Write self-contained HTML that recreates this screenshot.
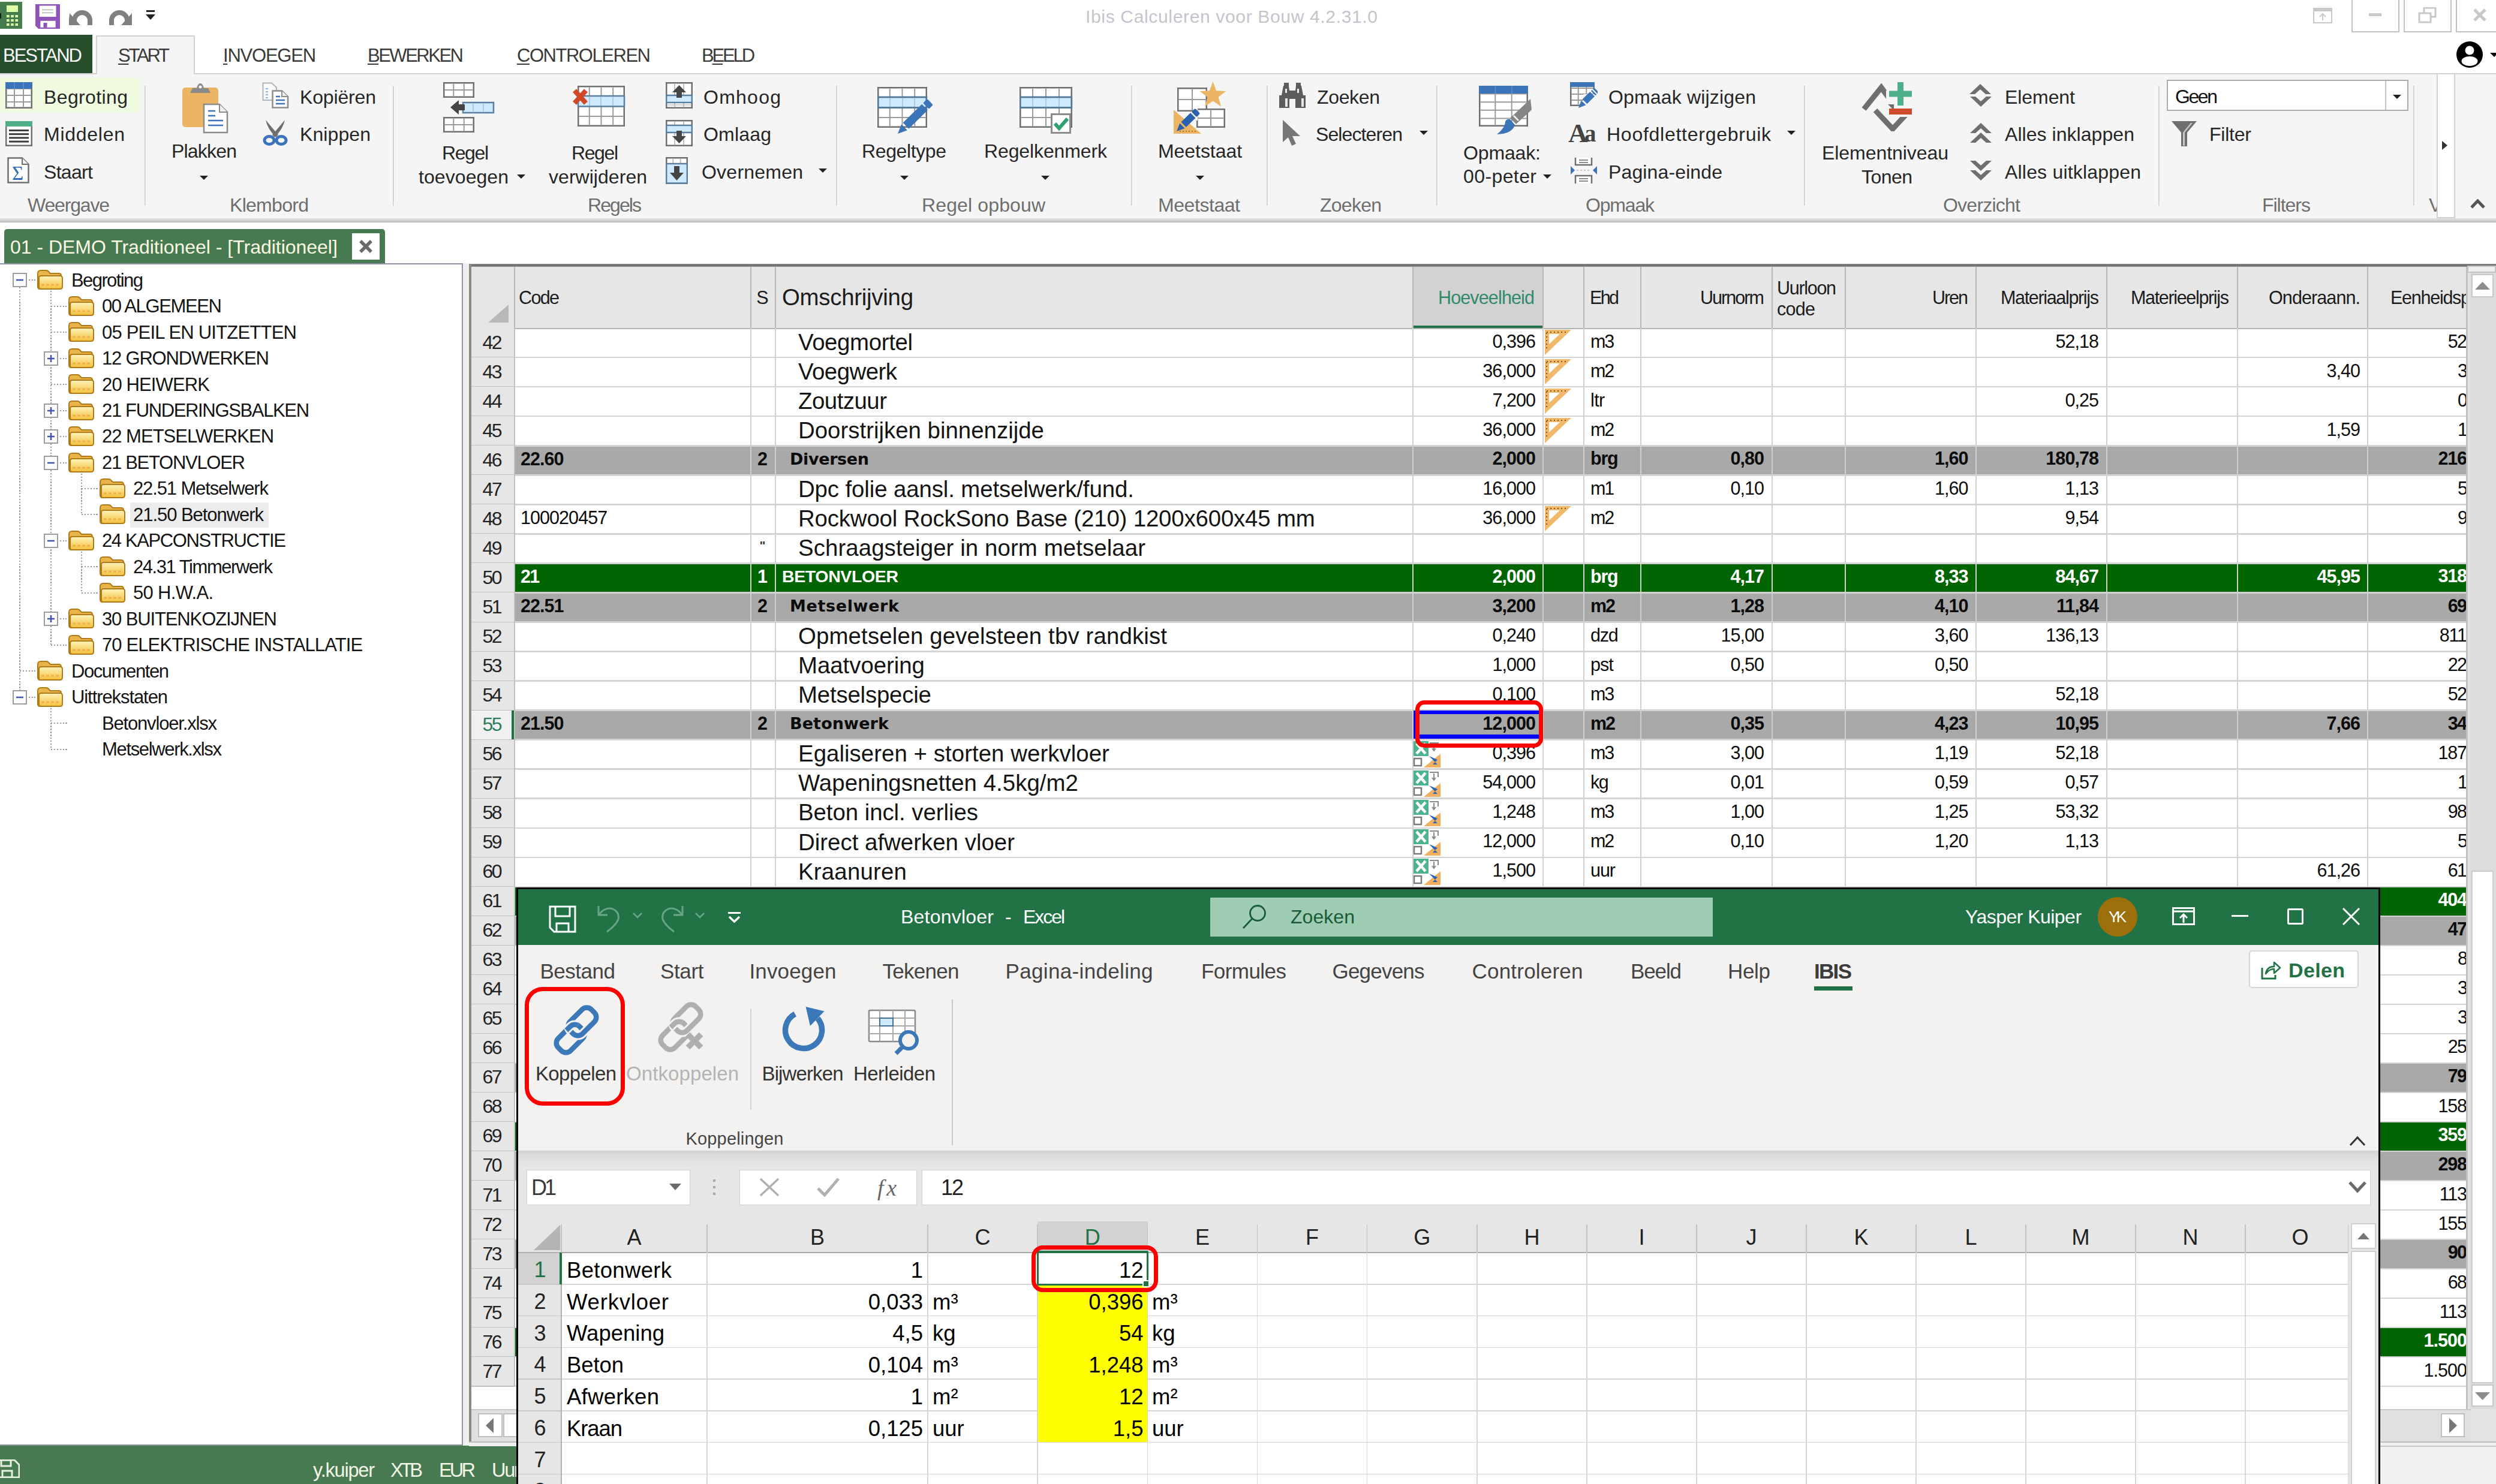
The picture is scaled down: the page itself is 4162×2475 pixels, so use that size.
<!DOCTYPE html>
<html lang="nl"><head><meta charset="utf-8"><title>Ibis Calculeren voor Bouw</title><style>
html,body{margin:0;padding:0;}
body{width:4162px;height:2475px;overflow:hidden;background:#fff;position:relative;font-family:"Liberation Sans",sans-serif;}
div,svg{position:absolute;box-sizing:border-box;}
.t{white-space:nowrap;}
u{text-decoration-thickness:2px;text-underline-offset:3px;}
</style></head><body>
<svg style="left:0px;top:3px;" width="38" height="45" viewBox="0 0 38 45"><rect x="-4" y="0" width="41" height="45" fill="#477c4e"/><rect x="11" y="6" width="19" height="11" fill="#dcffa8"/><rect x="11.0" y="22.0" width="4.6" height="4" fill="#dcffa8"/><rect x="11.0" y="29.0" width="4.6" height="4" fill="#dcffa8"/><rect x="11.0" y="36.0" width="4.6" height="4" fill="#dcffa8"/><rect x="18.2" y="22.0" width="4.6" height="4" fill="#dcffa8"/><rect x="18.2" y="29.0" width="4.6" height="4" fill="#dcffa8"/><rect x="18.2" y="36.0" width="4.6" height="4" fill="#dcffa8"/><rect x="25.4" y="22.0" width="4.6" height="4" fill="#dcffa8"/><rect x="25.4" y="29.0" width="4.6" height="4" fill="#dcffa8"/><rect x="25.4" y="36.0" width="4.6" height="4" fill="#dcffa8"/><rect x="-2" y="19" width="4" height="9" fill="#10200f"/></svg>
<svg style="left:59px;top:6.5px;" width="41" height="41" viewBox="0 0 41 41"><path d="M0 0H41V41H5L0 36Z" fill="#8f55b6"/><rect x="6.7" y="2.5" width="27.8" height="18.5" fill="#fff"/><rect x="11" y="8.3" width="19" height="2" fill="#c4c4c4"/><rect x="11" y="13.3" width="19" height="2" fill="#c4c4c4"/><rect x="8.4" y="27.8" width="25.3" height="11" fill="#fff"/><rect x="13.5" y="31" width="6" height="7.8" fill="#8f55b6"/></svg>
<svg style="left:115px;top:15px;" width="45" height="28" viewBox="0 0 45 28"><path d="M9 27V19A13 13 0 0 1 35 19V27" fill="none" stroke="#808080" stroke-width="8"/><path d="M0 8L16 27H-2Z" fill="#808080" transform="translate(1,0)"/><path d="M1 27V7L19 27Z" fill="#808080"/></svg>
<svg style="left:176px;top:15px;" width="45" height="28" viewBox="0 0 45 28"><path d="M36 27V19A13 13 0 0 0 10 19V27" fill="none" stroke="#808080" stroke-width="8"/><path d="M44 27V7L26 27Z" fill="#808080"/></svg>
<svg style="left:243px;top:17px;" width="16" height="17" viewBox="0 0 16 17"><rect x="1" y="0" width="14" height="3" fill="#222"/><path d="M0 7H16L8 16Z" fill="#222"/></svg>
<div class="t" style="left:1810.0px;top:13.3px;font-size:30px;line-height:30px;color:#c4c4cc;letter-spacing:0.66px;">Ibis Calculeren voor Bouw 4.2.31.0</div>
<div style="left:3921px;top:-3px;width:80px;height:57px;border:2.5px solid #c2c2c2;"></div>
<div style="left:4008px;top:-3px;width:80px;height:57px;border:2.5px solid #c2c2c2;"></div>
<div style="left:4095px;top:-3px;width:75px;height:57px;border:2.5px solid #c2c2c2;"></div>
<svg style="left:3857px;top:13px;" width="32" height="26" viewBox="0 0 32 26"><rect x="1" y="1" width="30" height="24" fill="#fff" stroke="#c8c8c8" stroke-width="2"/><rect x="1" y="1" width="30" height="5" fill="#c8c8c8"/><path d="M16 21V11M11 15L16 10L21 15" stroke="#c8c8c8" stroke-width="2" fill="none"/></svg>
<div style="left:3950px;top:22px;width:21px;height:5px;background:#c8c8c8;"></div>
<svg style="left:4032px;top:12px;" width="32" height="28" viewBox="0 0 32 28"><rect x="10" y="1" width="19" height="15" fill="none" stroke="#c8c8c8" stroke-width="3"/><rect x="2" y="10" width="19" height="15" fill="#fff" stroke="#c8c8c8" stroke-width="3"/></svg>
<svg style="left:4124px;top:14px;" width="22" height="22" viewBox="0 0 22 22"><path d="M2 2L20 20M20 2L2 20" stroke="#c8c8c8" stroke-width="5"/></svg>
<svg style="left:4096px;top:69px;" width="66" height="44" viewBox="0 0 66 44"><circle cx="22" cy="22" r="22" fill="#000"/><circle cx="22" cy="15" r="7.5" fill="#fff"/><clipPath id="ucl"><circle cx="22" cy="22" r="19.5"/></clipPath><ellipse cx="22" cy="33" rx="13.5" ry="8" fill="#fff" clip-path="url(#ucl)"/><path d="M56 19H70L63 26Z" fill="#000"/></svg>
<div style="left:0px;top:58px;width:154px;height:65px;background:#264d2c;"></div>
<div class="t" style="left:5.0px;top:77.4px;font-size:31px;line-height:31px;color:#fff;letter-spacing:-2.02px;">BESTAND</div>
<div style="left:160px;top:59px;width:165px;height:65px;background:#f5f5f5;border:2px solid #d2d2d2;border-bottom:none;"></div>
<div class="t" style="left:197.0px;top:77.4px;font-size:31px;line-height:31px;color:#3a3a3a;letter-spacing:-3.19px;"><u>S</u>TART</div>
<div class="t" style="left:372.0px;top:77.4px;font-size:31px;line-height:31px;color:#3a3a3a;letter-spacing:-1.23px;"><u>I</u>NVOEGEN</div>
<div class="t" style="left:613.0px;top:77.4px;font-size:31px;line-height:31px;color:#3a3a3a;letter-spacing:-2.49px;"><u>B</u>EWERKEN</div>
<div class="t" style="left:862.0px;top:77.4px;font-size:31px;line-height:31px;color:#3a3a3a;letter-spacing:-1.47px;"><u>C</u>ONTROLEREN</div>
<div class="t" style="left:1170.0px;top:77.4px;font-size:31px;line-height:31px;color:#3a3a3a;letter-spacing:-3.16px;">B<u>E</u>ELD</div>
<div style="left:0px;top:122px;width:4162px;height:242px;background:#f5f5f5;border-top:2px solid #d2d2d2;"></div>
<div style="left:162px;top:121px;width:161px;height:4px;background:#f5f5f5;"></div>
<div style="left:0px;top:364px;width:4162px;height:7px;background:linear-gradient(#e2e2e2,#d0d0d0 60%,#b4b4b4);"></div>
<div style="left:241px;top:143px;width:2px;height:200px;background:#d4d4d4;"></div>
<div style="left:243px;top:143px;width:1px;height:200px;background:#fff;"></div>
<div style="left:655px;top:143px;width:2px;height:200px;background:#d4d4d4;"></div>
<div style="left:657px;top:143px;width:1px;height:200px;background:#fff;"></div>
<div style="left:1394px;top:143px;width:2px;height:200px;background:#d4d4d4;"></div>
<div style="left:1396px;top:143px;width:1px;height:200px;background:#fff;"></div>
<div style="left:1886px;top:143px;width:2px;height:200px;background:#d4d4d4;"></div>
<div style="left:1888px;top:143px;width:1px;height:200px;background:#fff;"></div>
<div style="left:2112px;top:143px;width:2px;height:200px;background:#d4d4d4;"></div>
<div style="left:2114px;top:143px;width:1px;height:200px;background:#fff;"></div>
<div style="left:2395px;top:143px;width:2px;height:200px;background:#d4d4d4;"></div>
<div style="left:2397px;top:143px;width:1px;height:200px;background:#fff;"></div>
<div style="left:3008px;top:143px;width:2px;height:200px;background:#d4d4d4;"></div>
<div style="left:3010px;top:143px;width:1px;height:200px;background:#fff;"></div>
<div style="left:3599px;top:143px;width:2px;height:200px;background:#d4d4d4;"></div>
<div style="left:3601px;top:143px;width:1px;height:200px;background:#fff;"></div>
<div style="left:4024px;top:143px;width:2px;height:200px;background:#d4d4d4;"></div>
<div style="left:4026px;top:143px;width:1px;height:200px;background:#fff;"></div>
<div style="left:0px;top:130px;width:233px;height:58px;background:#f0fbe0;"></div>
<div class="t" style="left:73.0px;top:145.9px;font-size:32px;line-height:32px;color:#262626;letter-spacing:0.38px;">Begroting</div>
<div class="t" style="left:73.0px;top:208.4px;font-size:32px;line-height:32px;color:#262626;letter-spacing:0.73px;">Middelen</div>
<div class="t" style="left:73.0px;top:271.4px;font-size:32px;line-height:32px;color:#262626;letter-spacing:-0.68px;">Staart</div>
<div class="t" style="left:46.0px;top:326.4px;font-size:32px;line-height:32px;color:#6e6e6e;letter-spacing:-1.18px;">Weergave</div>
<div class="t" style="left:286.0px;top:236.4px;font-size:32px;line-height:32px;color:#262626;letter-spacing:-0.81px;">Plakken</div>
<svg style="left:333px;top:293px;" width="14" height="7" viewBox="0 0 14 7"><path d="M0 0H14L7.0 7Z" fill="#222"/></svg>
<div class="t" style="left:500.0px;top:145.9px;font-size:32px;line-height:32px;color:#262626;letter-spacing:-0.16px;">Kopiëren</div>
<div class="t" style="left:500.0px;top:208.4px;font-size:32px;line-height:32px;color:#262626;letter-spacing:0.09px;">Knippen</div>
<div class="t" style="left:383.0px;top:326.4px;font-size:32px;line-height:32px;color:#6e6e6e;letter-spacing:-0.71px;">Klembord</div>
<div class="t" style="left:737.0px;top:239.4px;font-size:32px;line-height:32px;color:#262626;letter-spacing:-1.40px;">Regel</div>
<div class="t" style="left:698.0px;top:279.4px;font-size:32px;line-height:32px;color:#262626;letter-spacing:0.07px;">toevoegen</div>
<svg style="left:861.5px;top:290.5px;" width="14" height="7" viewBox="0 0 14 7"><path d="M0 0H14L7.0 7Z" fill="#222"/></svg>
<div class="t" style="left:953.0px;top:239.4px;font-size:32px;line-height:32px;color:#262626;letter-spacing:-1.40px;">Regel</div>
<div class="t" style="left:915.0px;top:279.4px;font-size:32px;line-height:32px;color:#262626;letter-spacing:0.04px;">verwijderen</div>
<div class="t" style="left:1173.0px;top:145.9px;font-size:32px;line-height:32px;color:#262626;letter-spacing:1.25px;">Omhoog</div>
<div class="t" style="left:1173.0px;top:208.4px;font-size:32px;line-height:32px;color:#262626;letter-spacing:0.19px;">Omlaag</div>
<div class="t" style="left:1170.0px;top:271.4px;font-size:32px;line-height:32px;color:#262626;letter-spacing:0.23px;">Overnemen</div>
<svg style="left:1365px;top:280.5px;" width="14" height="7" viewBox="0 0 14 7"><path d="M0 0H14L7.0 7Z" fill="#222"/></svg>
<div class="t" style="left:980.0px;top:326.4px;font-size:32px;line-height:32px;color:#6e6e6e;letter-spacing:-1.92px;">Regels</div>
<div class="t" style="left:1437.0px;top:236.4px;font-size:32px;line-height:32px;color:#262626;letter-spacing:-0.39px;">Regeltype</div>
<svg style="left:1501px;top:293px;" width="14" height="7" viewBox="0 0 14 7"><path d="M0 0H14L7.0 7Z" fill="#222"/></svg>
<div class="t" style="left:1641.0px;top:236.4px;font-size:32px;line-height:32px;color:#262626;letter-spacing:-0.12px;">Regelkenmerk</div>
<svg style="left:1736px;top:293px;" width="14" height="7" viewBox="0 0 14 7"><path d="M0 0H14L7.0 7Z" fill="#222"/></svg>
<div class="t" style="left:1537.0px;top:326.4px;font-size:32px;line-height:32px;color:#6e6e6e;letter-spacing:0.13px;">Regel opbouw</div>
<div class="t" style="left:1931.0px;top:236.4px;font-size:32px;line-height:32px;color:#262626;letter-spacing:-0.06px;">Meetstaat</div>
<svg style="left:1994px;top:293px;" width="14" height="7" viewBox="0 0 14 7"><path d="M0 0H14L7.0 7Z" fill="#222"/></svg>
<div class="t" style="left:1931.0px;top:326.4px;font-size:32px;line-height:32px;color:#6e6e6e;letter-spacing:-0.44px;">Meetstaat</div>
<div class="t" style="left:2196.0px;top:145.9px;font-size:32px;line-height:32px;color:#262626;letter-spacing:-0.35px;">Zoeken</div>
<div class="t" style="left:2194.0px;top:208.4px;font-size:32px;line-height:32px;color:#262626;letter-spacing:-0.89px;">Selecteren</div>
<svg style="left:2367px;top:217.5px;" width="14" height="7" viewBox="0 0 14 7"><path d="M0 0H14L7.0 7Z" fill="#222"/></svg>
<div class="t" style="left:2201.0px;top:326.4px;font-size:32px;line-height:32px;color:#6e6e6e;letter-spacing:-0.75px;">Zoeken</div>
<div class="t" style="left:2440.0px;top:239.4px;font-size:32px;line-height:32px;color:#262626;letter-spacing:-0.14px;">Opmaak:</div>
<div class="t" style="left:2440.0px;top:278.4px;font-size:32px;line-height:32px;color:#262626;letter-spacing:0.40px;">00-peter</div>
<svg style="left:2573px;top:290.5px;" width="14" height="7" viewBox="0 0 14 7"><path d="M0 0H14L7.0 7Z" fill="#222"/></svg>
<div class="t" style="left:2682.0px;top:145.9px;font-size:32px;line-height:32px;color:#262626;letter-spacing:0.17px;">Opmaak wijzigen</div>
<div class="t" style="left:2679.0px;top:208.4px;font-size:32px;line-height:32px;color:#262626;letter-spacing:0.74px;">Hoofdlettergebruik</div>
<svg style="left:2980px;top:217.5px;" width="14" height="7" viewBox="0 0 14 7"><path d="M0 0H14L7.0 7Z" fill="#222"/></svg>
<div class="t" style="left:2682.0px;top:271.4px;font-size:32px;line-height:32px;color:#262626;letter-spacing:0.13px;">Pagina-einde</div>
<div class="t" style="left:2644.0px;top:326.4px;font-size:32px;line-height:32px;color:#6e6e6e;letter-spacing:-1.19px;">Opmaak</div>
<div class="t" style="left:3038.0px;top:239.4px;font-size:32px;line-height:32px;color:#262626;letter-spacing:-0.06px;">Elementniveau</div>
<div class="t" style="left:3104.0px;top:279.4px;font-size:32px;line-height:32px;color:#262626;letter-spacing:-0.55px;">Tonen</div>
<div class="t" style="left:3343.0px;top:145.9px;font-size:32px;line-height:32px;color:#262626;letter-spacing:-0.07px;">Element</div>
<div class="t" style="left:3343.0px;top:208.4px;font-size:32px;line-height:32px;color:#262626;letter-spacing:0.05px;">Alles inklappen</div>
<div class="t" style="left:3343.0px;top:271.4px;font-size:32px;line-height:32px;color:#262626;letter-spacing:0.19px;">Alles uitklappen</div>
<div class="t" style="left:3240.0px;top:326.4px;font-size:32px;line-height:32px;color:#6e6e6e;letter-spacing:-0.77px;">Overzicht</div>
<div style="left:3613px;top:133px;width:403px;height:52px;background:#fff;border:2px solid #ababab;"></div>
<div style="left:3977px;top:135px;width:2px;height:48px;background:#c4c4c4;"></div>
<div class="t" style="left:3627.0px;top:145.4px;font-size:32px;line-height:32px;color:#111;letter-spacing:-2.43px;">Geen</div>
<svg style="left:3989.5px;top:157.5px;" width="14" height="7" viewBox="0 0 14 7"><path d="M0 0H14L7.0 7Z" fill="#222"/></svg>
<div class="t" style="left:3684.0px;top:208.4px;font-size:32px;line-height:32px;color:#262626;letter-spacing:-0.22px;">Filter</div>
<div class="t" style="left:3772.0px;top:326.4px;font-size:32px;line-height:32px;color:#6e6e6e;letter-spacing:-1.02px;">Filters</div>
<div class="t" style="left:4050.0px;top:326.4px;font-size:32px;line-height:32px;color:#6e6e6e;">V</div>
<div style="left:4063px;top:122px;width:31px;height:242px;background:#fff;border:2px solid #d2d2d2;"></div>
<div style="left:4094px;top:124px;width:68px;height:240px;background:#f5f5f5;"></div>
<svg style="left:4072px;top:235px;" width="9" height="15" viewBox="0 0 9 15"><path d="M0 0L9 7.5L0 15Z" fill="#333"/></svg>
<svg style="left:4119px;top:332px;" width="25" height="16" viewBox="0 0 25 16"><path d="M2 14L12.5 3L23 14" fill="none" stroke="#555" stroke-width="5"/></svg>
<div style="left:7px;top:382px;width:635px;height:58px;background:#477a50;border-radius:5px 5px 0 0;"></div>
<div class="t" style="left:17.0px;top:396.4px;font-size:32px;line-height:32px;color:#fbfbe4;letter-spacing:-0.02px;">01 - DEMO Traditioneel - [Traditioneel]</div>
<div style="left:587px;top:389px;width:46px;height:44px;background:#fff;"></div>
<svg style="left:598px;top:399px;" width="24" height="24" viewBox="0 0 24 24"><path d="M3 3L21 21M21 3L3 21" stroke="#6a6a6a" stroke-width="5.5"/></svg>
<div style="left:0px;top:439px;width:772px;height:1972px;background:#fff;border:2px solid #8e96a6;border-left:none;"></div>
<div style="left:772px;top:439px;width:10px;height:1972px;background:#f0f0f0;"></div>
<svg width="0" height="0" style="left:0;top:0"><defs><linearGradient id="fg" x1="0" y1="0" x2="0" y2="1"><stop offset="0" stop-color="#fff3b8"/><stop offset="1" stop-color="#f3c23f"/></linearGradient></defs></svg>
<div style="left:32px;top:479.3px;width:2px;height:671.36px;background:repeating-linear-gradient(180deg,#9a9a9a 0 2.45px,transparent 2.45px 4.9px);"></div>
<div style="left:83.5px;top:485.3px;width:2px;height:590.44px;background:repeating-linear-gradient(180deg,#9a9a9a 0 2.45px,transparent 2.45px 4.9px);"></div>
<div style="left:135px;top:789.52px;width:2px;height:68.92px;background:repeating-linear-gradient(180deg,#9a9a9a 0 2.45px,transparent 2.45px 4.9px);"></div>
<div style="left:135px;top:919.9px;width:2px;height:68.92px;background:repeating-linear-gradient(180deg,#9a9a9a 0 2.45px,transparent 2.45px 4.9px);"></div>
<div style="left:83.5px;top:1180.66px;width:2px;height:68.92px;background:repeating-linear-gradient(180deg,#9a9a9a 0 2.45px,transparent 2.45px 4.9px);"></div>
<div style="left:217px;top:838px;width:231px;height:42px;background:#ececec;"></div>
<div style="left:33px;top:466.3px;width:26px;height:2px;background:repeating-linear-gradient(90deg,#9a9a9a 0 2.45px,transparent 2.45px 4.9px);"></div>
<svg style="left:21px;top:455.3px;" width="24" height="24" viewBox="0 0 24 24"><rect x="1" y="1" width="22" height="22" fill="#fdfdfd" stroke="#9c9c9c" stroke-width="2"/><path d="M6 12H18" stroke="#3e57a8" stroke-width="2.5"/></svg>
<svg style="left:60px;top:448.3px;" width="46" height="36" viewBox="0 0 46 36"><path d="M3 8Q3 3 8 3H17Q20 3 22 6L24 8H38Q42 8 42 12V30Q42 34 38 34H7Q3 34 3 30Z" fill="#e9b44a" stroke="#b07a18" stroke-width="2"/><path d="M5 15Q5 12 9 12H40Q44 12 44 16V30Q44 34 40 34H8Q5 34 5 31Z" fill="url(#fg)" stroke="#b07a18" stroke-width="2"/><path d="M9 27H40" stroke="#f4a040" stroke-width="3" stroke-dasharray="5 3" opacity=".7"/></svg>
<div class="t" style="left:119.0px;top:451.7px;font-size:31px;line-height:31px;color:#141414;letter-spacing:-1.59px;">Begroting</div>
<div style="left:84.5px;top:509.76px;width:26.5px;height:2px;background:repeating-linear-gradient(90deg,#9a9a9a 0 2.45px,transparent 2.45px 4.9px);"></div>
<svg style="left:112px;top:491.76px;" width="46" height="36" viewBox="0 0 46 36"><path d="M3 8Q3 3 8 3H17Q20 3 22 6L24 8H38Q42 8 42 12V30Q42 34 38 34H7Q3 34 3 30Z" fill="#e9b44a" stroke="#b07a18" stroke-width="2"/><path d="M5 15Q5 12 9 12H40Q44 12 44 16V30Q44 34 40 34H8Q5 34 5 31Z" fill="url(#fg)" stroke="#b07a18" stroke-width="2"/><path d="M9 27H40" stroke="#f4a040" stroke-width="3" stroke-dasharray="5 3" opacity=".7"/></svg>
<div class="t" style="left:170.0px;top:495.1px;font-size:31px;line-height:31px;color:#141414;letter-spacing:-1.37px;">00 ALGEMEEN</div>
<div style="left:84.5px;top:553.22px;width:26.5px;height:2px;background:repeating-linear-gradient(90deg,#9a9a9a 0 2.45px,transparent 2.45px 4.9px);"></div>
<svg style="left:112px;top:535.22px;" width="46" height="36" viewBox="0 0 46 36"><path d="M3 8Q3 3 8 3H17Q20 3 22 6L24 8H38Q42 8 42 12V30Q42 34 38 34H7Q3 34 3 30Z" fill="#e9b44a" stroke="#b07a18" stroke-width="2"/><path d="M5 15Q5 12 9 12H40Q44 12 44 16V30Q44 34 40 34H8Q5 34 5 31Z" fill="url(#fg)" stroke="#b07a18" stroke-width="2"/><path d="M9 27H40" stroke="#f4a040" stroke-width="3" stroke-dasharray="5 3" opacity=".7"/></svg>
<div class="t" style="left:170.0px;top:538.6px;font-size:31px;line-height:31px;color:#141414;letter-spacing:-0.79px;">05 PEIL EN UITZETTEN</div>
<div style="left:84.5px;top:596.68px;width:26.5px;height:2px;background:repeating-linear-gradient(90deg,#9a9a9a 0 2.45px,transparent 2.45px 4.9px);"></div>
<svg style="left:72.5px;top:585.68px;" width="24" height="24" viewBox="0 0 24 24"><rect x="1" y="1" width="22" height="22" fill="#fdfdfd" stroke="#9c9c9c" stroke-width="2"/><path d="M6 12H18" stroke="#3e57a8" stroke-width="2.5"/><path d="M12 6V18" stroke="#3e57a8" stroke-width="2.5"/></svg>
<svg style="left:112px;top:578.68px;" width="46" height="36" viewBox="0 0 46 36"><path d="M3 8Q3 3 8 3H17Q20 3 22 6L24 8H38Q42 8 42 12V30Q42 34 38 34H7Q3 34 3 30Z" fill="#e9b44a" stroke="#b07a18" stroke-width="2"/><path d="M5 15Q5 12 9 12H40Q44 12 44 16V30Q44 34 40 34H8Q5 34 5 31Z" fill="url(#fg)" stroke="#b07a18" stroke-width="2"/><path d="M9 27H40" stroke="#f4a040" stroke-width="3" stroke-dasharray="5 3" opacity=".7"/></svg>
<div class="t" style="left:170.0px;top:582.0px;font-size:31px;line-height:31px;color:#141414;letter-spacing:-1.20px;">12 GRONDWERKEN</div>
<div style="left:84.5px;top:640.14px;width:26.5px;height:2px;background:repeating-linear-gradient(90deg,#9a9a9a 0 2.45px,transparent 2.45px 4.9px);"></div>
<svg style="left:112px;top:622.14px;" width="46" height="36" viewBox="0 0 46 36"><path d="M3 8Q3 3 8 3H17Q20 3 22 6L24 8H38Q42 8 42 12V30Q42 34 38 34H7Q3 34 3 30Z" fill="#e9b44a" stroke="#b07a18" stroke-width="2"/><path d="M5 15Q5 12 9 12H40Q44 12 44 16V30Q44 34 40 34H8Q5 34 5 31Z" fill="url(#fg)" stroke="#b07a18" stroke-width="2"/><path d="M9 27H40" stroke="#f4a040" stroke-width="3" stroke-dasharray="5 3" opacity=".7"/></svg>
<div class="t" style="left:170.0px;top:625.5px;font-size:31px;line-height:31px;color:#141414;letter-spacing:-0.86px;">20 HEIWERK</div>
<div style="left:84.5px;top:683.6px;width:26.5px;height:2px;background:repeating-linear-gradient(90deg,#9a9a9a 0 2.45px,transparent 2.45px 4.9px);"></div>
<svg style="left:72.5px;top:672.6px;" width="24" height="24" viewBox="0 0 24 24"><rect x="1" y="1" width="22" height="22" fill="#fdfdfd" stroke="#9c9c9c" stroke-width="2"/><path d="M6 12H18" stroke="#3e57a8" stroke-width="2.5"/><path d="M12 6V18" stroke="#3e57a8" stroke-width="2.5"/></svg>
<svg style="left:112px;top:665.6px;" width="46" height="36" viewBox="0 0 46 36"><path d="M3 8Q3 3 8 3H17Q20 3 22 6L24 8H38Q42 8 42 12V30Q42 34 38 34H7Q3 34 3 30Z" fill="#e9b44a" stroke="#b07a18" stroke-width="2"/><path d="M5 15Q5 12 9 12H40Q44 12 44 16V30Q44 34 40 34H8Q5 34 5 31Z" fill="url(#fg)" stroke="#b07a18" stroke-width="2"/><path d="M9 27H40" stroke="#f4a040" stroke-width="3" stroke-dasharray="5 3" opacity=".7"/></svg>
<div class="t" style="left:170.0px;top:669.0px;font-size:31px;line-height:31px;color:#141414;letter-spacing:-1.35px;">21 FUNDERINGSBALKEN</div>
<div style="left:84.5px;top:727.06px;width:26.5px;height:2px;background:repeating-linear-gradient(90deg,#9a9a9a 0 2.45px,transparent 2.45px 4.9px);"></div>
<svg style="left:72.5px;top:716.06px;" width="24" height="24" viewBox="0 0 24 24"><rect x="1" y="1" width="22" height="22" fill="#fdfdfd" stroke="#9c9c9c" stroke-width="2"/><path d="M6 12H18" stroke="#3e57a8" stroke-width="2.5"/><path d="M12 6V18" stroke="#3e57a8" stroke-width="2.5"/></svg>
<svg style="left:112px;top:709.06px;" width="46" height="36" viewBox="0 0 46 36"><path d="M3 8Q3 3 8 3H17Q20 3 22 6L24 8H38Q42 8 42 12V30Q42 34 38 34H7Q3 34 3 30Z" fill="#e9b44a" stroke="#b07a18" stroke-width="2"/><path d="M5 15Q5 12 9 12H40Q44 12 44 16V30Q44 34 40 34H8Q5 34 5 31Z" fill="url(#fg)" stroke="#b07a18" stroke-width="2"/><path d="M9 27H40" stroke="#f4a040" stroke-width="3" stroke-dasharray="5 3" opacity=".7"/></svg>
<div class="t" style="left:170.0px;top:712.4px;font-size:31px;line-height:31px;color:#141414;letter-spacing:-0.99px;">22 METSELWERKEN</div>
<div style="left:84.5px;top:770.52px;width:26.5px;height:2px;background:repeating-linear-gradient(90deg,#9a9a9a 0 2.45px,transparent 2.45px 4.9px);"></div>
<svg style="left:72.5px;top:759.52px;" width="24" height="24" viewBox="0 0 24 24"><rect x="1" y="1" width="22" height="22" fill="#fdfdfd" stroke="#9c9c9c" stroke-width="2"/><path d="M6 12H18" stroke="#3e57a8" stroke-width="2.5"/></svg>
<svg style="left:112px;top:752.52px;" width="46" height="36" viewBox="0 0 46 36"><path d="M3 8Q3 3 8 3H17Q20 3 22 6L24 8H38Q42 8 42 12V30Q42 34 38 34H7Q3 34 3 30Z" fill="#e9b44a" stroke="#b07a18" stroke-width="2"/><path d="M5 15Q5 12 9 12H40Q44 12 44 16V30Q44 34 40 34H8Q5 34 5 31Z" fill="url(#fg)" stroke="#b07a18" stroke-width="2"/><path d="M9 27H40" stroke="#f4a040" stroke-width="3" stroke-dasharray="5 3" opacity=".7"/></svg>
<div class="t" style="left:170.0px;top:755.9px;font-size:31px;line-height:31px;color:#141414;letter-spacing:-1.29px;">21 BETONVLOER</div>
<div style="left:136px;top:813.98px;width:27px;height:2px;background:repeating-linear-gradient(90deg,#9a9a9a 0 2.45px,transparent 2.45px 4.9px);"></div>
<svg style="left:164px;top:795.98px;" width="46" height="36" viewBox="0 0 46 36"><path d="M3 8Q3 3 8 3H17Q20 3 22 6L24 8H38Q42 8 42 12V30Q42 34 38 34H7Q3 34 3 30Z" fill="#e9b44a" stroke="#b07a18" stroke-width="2"/><path d="M5 15Q5 12 9 12H40Q44 12 44 16V30Q44 34 40 34H8Q5 34 5 31Z" fill="url(#fg)" stroke="#b07a18" stroke-width="2"/><path d="M9 27H40" stroke="#f4a040" stroke-width="3" stroke-dasharray="5 3" opacity=".7"/></svg>
<div class="t" style="left:222.0px;top:799.3px;font-size:31px;line-height:31px;color:#141414;letter-spacing:-1.13px;">22.51 Metselwerk</div>
<div style="left:136px;top:857.44px;width:27px;height:2px;background:repeating-linear-gradient(90deg,#9a9a9a 0 2.45px,transparent 2.45px 4.9px);"></div>
<svg style="left:164px;top:839.44px;" width="46" height="36" viewBox="0 0 46 36"><path d="M3 8Q3 3 8 3H17Q20 3 22 6L24 8H38Q42 8 42 12V30Q42 34 38 34H7Q3 34 3 30Z" fill="#e9b44a" stroke="#b07a18" stroke-width="2"/><path d="M5 15Q5 12 9 12H40Q44 12 44 16V30Q44 34 40 34H8Q5 34 5 31Z" fill="url(#fg)" stroke="#b07a18" stroke-width="2"/><path d="M9 27H40" stroke="#f4a040" stroke-width="3" stroke-dasharray="5 3" opacity=".7"/></svg>
<div class="t" style="left:222.0px;top:842.8px;font-size:31px;line-height:31px;color:#141414;letter-spacing:-1.05px;">21.50 Betonwerk</div>
<div style="left:84.5px;top:900.9px;width:26.5px;height:2px;background:repeating-linear-gradient(90deg,#9a9a9a 0 2.45px,transparent 2.45px 4.9px);"></div>
<svg style="left:72.5px;top:889.9px;" width="24" height="24" viewBox="0 0 24 24"><rect x="1" y="1" width="22" height="22" fill="#fdfdfd" stroke="#9c9c9c" stroke-width="2"/><path d="M6 12H18" stroke="#3e57a8" stroke-width="2.5"/></svg>
<svg style="left:112px;top:882.9px;" width="46" height="36" viewBox="0 0 46 36"><path d="M3 8Q3 3 8 3H17Q20 3 22 6L24 8H38Q42 8 42 12V30Q42 34 38 34H7Q3 34 3 30Z" fill="#e9b44a" stroke="#b07a18" stroke-width="2"/><path d="M5 15Q5 12 9 12H40Q44 12 44 16V30Q44 34 40 34H8Q5 34 5 31Z" fill="url(#fg)" stroke="#b07a18" stroke-width="2"/><path d="M9 27H40" stroke="#f4a040" stroke-width="3" stroke-dasharray="5 3" opacity=".7"/></svg>
<div class="t" style="left:170.0px;top:886.3px;font-size:31px;line-height:31px;color:#141414;letter-spacing:-1.38px;">24 KAPCONSTRUCTIE</div>
<div style="left:136px;top:944.36px;width:27px;height:2px;background:repeating-linear-gradient(90deg,#9a9a9a 0 2.45px,transparent 2.45px 4.9px);"></div>
<svg style="left:164px;top:926.36px;" width="46" height="36" viewBox="0 0 46 36"><path d="M3 8Q3 3 8 3H17Q20 3 22 6L24 8H38Q42 8 42 12V30Q42 34 38 34H7Q3 34 3 30Z" fill="#e9b44a" stroke="#b07a18" stroke-width="2"/><path d="M5 15Q5 12 9 12H40Q44 12 44 16V30Q44 34 40 34H8Q5 34 5 31Z" fill="url(#fg)" stroke="#b07a18" stroke-width="2"/><path d="M9 27H40" stroke="#f4a040" stroke-width="3" stroke-dasharray="5 3" opacity=".7"/></svg>
<div class="t" style="left:222.0px;top:929.7px;font-size:31px;line-height:31px;color:#141414;letter-spacing:-1.47px;">24.31 Timmerwerk</div>
<div style="left:136px;top:987.82px;width:27px;height:2px;background:repeating-linear-gradient(90deg,#9a9a9a 0 2.45px,transparent 2.45px 4.9px);"></div>
<svg style="left:164px;top:969.82px;" width="46" height="36" viewBox="0 0 46 36"><path d="M3 8Q3 3 8 3H17Q20 3 22 6L24 8H38Q42 8 42 12V30Q42 34 38 34H7Q3 34 3 30Z" fill="#e9b44a" stroke="#b07a18" stroke-width="2"/><path d="M5 15Q5 12 9 12H40Q44 12 44 16V30Q44 34 40 34H8Q5 34 5 31Z" fill="url(#fg)" stroke="#b07a18" stroke-width="2"/><path d="M9 27H40" stroke="#f4a040" stroke-width="3" stroke-dasharray="5 3" opacity=".7"/></svg>
<div class="t" style="left:222.0px;top:973.2px;font-size:31px;line-height:31px;color:#141414;letter-spacing:-0.69px;">50 H.W.A.</div>
<div style="left:84.5px;top:1031.28px;width:26.5px;height:2px;background:repeating-linear-gradient(90deg,#9a9a9a 0 2.45px,transparent 2.45px 4.9px);"></div>
<svg style="left:72.5px;top:1020.28px;" width="24" height="24" viewBox="0 0 24 24"><rect x="1" y="1" width="22" height="22" fill="#fdfdfd" stroke="#9c9c9c" stroke-width="2"/><path d="M6 12H18" stroke="#3e57a8" stroke-width="2.5"/><path d="M12 6V18" stroke="#3e57a8" stroke-width="2.5"/></svg>
<svg style="left:112px;top:1013.28px;" width="46" height="36" viewBox="0 0 46 36"><path d="M3 8Q3 3 8 3H17Q20 3 22 6L24 8H38Q42 8 42 12V30Q42 34 38 34H7Q3 34 3 30Z" fill="#e9b44a" stroke="#b07a18" stroke-width="2"/><path d="M5 15Q5 12 9 12H40Q44 12 44 16V30Q44 34 40 34H8Q5 34 5 31Z" fill="url(#fg)" stroke="#b07a18" stroke-width="2"/><path d="M9 27H40" stroke="#f4a040" stroke-width="3" stroke-dasharray="5 3" opacity=".7"/></svg>
<div class="t" style="left:170.0px;top:1016.6px;font-size:31px;line-height:31px;color:#141414;letter-spacing:-1.13px;">30 BUITENKOZIJNEN</div>
<div style="left:84.5px;top:1074.74px;width:26.5px;height:2px;background:repeating-linear-gradient(90deg,#9a9a9a 0 2.45px,transparent 2.45px 4.9px);"></div>
<svg style="left:112px;top:1056.74px;" width="46" height="36" viewBox="0 0 46 36"><path d="M3 8Q3 3 8 3H17Q20 3 22 6L24 8H38Q42 8 42 12V30Q42 34 38 34H7Q3 34 3 30Z" fill="#e9b44a" stroke="#b07a18" stroke-width="2"/><path d="M5 15Q5 12 9 12H40Q44 12 44 16V30Q44 34 40 34H8Q5 34 5 31Z" fill="url(#fg)" stroke="#b07a18" stroke-width="2"/><path d="M9 27H40" stroke="#f4a040" stroke-width="3" stroke-dasharray="5 3" opacity=".7"/></svg>
<div class="t" style="left:170.0px;top:1060.1px;font-size:31px;line-height:31px;color:#141414;letter-spacing:-0.88px;">70 ELEKTRISCHE INSTALLATIE</div>
<div style="left:33px;top:1118.2px;width:26px;height:2px;background:repeating-linear-gradient(90deg,#9a9a9a 0 2.45px,transparent 2.45px 4.9px);"></div>
<svg style="left:60px;top:1100.2px;" width="46" height="36" viewBox="0 0 46 36"><path d="M3 8Q3 3 8 3H17Q20 3 22 6L24 8H38Q42 8 42 12V30Q42 34 38 34H7Q3 34 3 30Z" fill="#e9b44a" stroke="#b07a18" stroke-width="2"/><path d="M5 15Q5 12 9 12H40Q44 12 44 16V30Q44 34 40 34H8Q5 34 5 31Z" fill="url(#fg)" stroke="#b07a18" stroke-width="2"/><path d="M9 27H40" stroke="#f4a040" stroke-width="3" stroke-dasharray="5 3" opacity=".7"/></svg>
<div class="t" style="left:119.0px;top:1103.6px;font-size:31px;line-height:31px;color:#141414;letter-spacing:-1.42px;">Documenten</div>
<div style="left:33px;top:1161.66px;width:26px;height:2px;background:repeating-linear-gradient(90deg,#9a9a9a 0 2.45px,transparent 2.45px 4.9px);"></div>
<svg style="left:21px;top:1150.66px;" width="24" height="24" viewBox="0 0 24 24"><rect x="1" y="1" width="22" height="22" fill="#fdfdfd" stroke="#9c9c9c" stroke-width="2"/><path d="M6 12H18" stroke="#3e57a8" stroke-width="2.5"/></svg>
<svg style="left:60px;top:1143.66px;" width="46" height="36" viewBox="0 0 46 36"><path d="M3 8Q3 3 8 3H17Q20 3 22 6L24 8H38Q42 8 42 12V30Q42 34 38 34H7Q3 34 3 30Z" fill="#e9b44a" stroke="#b07a18" stroke-width="2"/><path d="M5 15Q5 12 9 12H40Q44 12 44 16V30Q44 34 40 34H8Q5 34 5 31Z" fill="url(#fg)" stroke="#b07a18" stroke-width="2"/><path d="M9 27H40" stroke="#f4a040" stroke-width="3" stroke-dasharray="5 3" opacity=".7"/></svg>
<div class="t" style="left:119.0px;top:1147.0px;font-size:31px;line-height:31px;color:#141414;letter-spacing:-1.08px;">Uittrekstaten</div>
<div style="left:84.5px;top:1205.12px;width:29.5px;height:2px;background:repeating-linear-gradient(90deg,#9a9a9a 0 2.45px,transparent 2.45px 4.9px);"></div>
<div class="t" style="left:170.0px;top:1190.5px;font-size:31px;line-height:31px;color:#141414;letter-spacing:-1.18px;">Betonvloer.xlsx</div>
<div style="left:84.5px;top:1248.58px;width:29.5px;height:2px;background:repeating-linear-gradient(90deg,#9a9a9a 0 2.45px,transparent 2.45px 4.9px);"></div>
<div class="t" style="left:170.0px;top:1233.9px;font-size:31px;line-height:31px;color:#141414;letter-spacing:-1.34px;">Metselwerk.xlsx</div>
<div style="left:0px;top:2411px;width:4162px;height:64px;background:#477a50;"></div>
<svg style="left:0px;top:2434px;" width="33" height="31" viewBox="0 0 33 31"><path d="M-4 1H24L32 9V30H-4Z" fill="none" stroke="#e8f0e4" stroke-width="3"/><rect x="2" y="1" width="16" height="10" fill="none" stroke="#e8f0e4" stroke-width="3"/><rect x="4" y="19" width="16" height="11" fill="none" stroke="#e8f0e4" stroke-width="3"/></svg>
<div class="t" style="left:522.0px;top:2435.6px;font-size:32.5px;line-height:32.5px;color:#f2f7e8;letter-spacing:-1.20px;">y.kuiper</div>
<div class="t" style="left:651.0px;top:2435.6px;font-size:32.5px;line-height:32.5px;color:#f2f7e8;letter-spacing:-4.60px;">XTB</div>
<div class="t" style="left:732.0px;top:2435.6px;font-size:32.5px;line-height:32.5px;color:#f2f7e8;letter-spacing:-3.81px;">EUR</div>
<div class="t" style="left:820.0px;top:2435.6px;font-size:32.5px;line-height:32.5px;color:#f2f7e8;letter-spacing:-2.30px;">Uurloon</div>
<svg style="left:9px;top:137px;" width="45" height="44" viewBox="0 0 45 44"><rect x="1.25" y="1.25" width="42.5" height="41.5" fill="#fff" stroke="#6f6f6f" stroke-width="2.5"/><path d="M15.0 2.5V41.5" stroke="#9a9a9a" stroke-width="2"/><path d="M30.0 2.5V41.5" stroke="#9a9a9a" stroke-width="2"/><path d="M2.5 11.0H42.5" stroke="#9a9a9a" stroke-width="2"/><path d="M2.5 22.0H42.5" stroke="#9a9a9a" stroke-width="2"/><path d="M2.5 33.0H42.5" stroke="#9a9a9a" stroke-width="2"/><rect x="0" y="0" width="45" height="11" fill="#3b74b8"/><path d="M15 0V11M30 0V11" stroke="#5f8fcc" stroke-width="1.5"/></svg>
<svg style="left:9px;top:202px;" width="45" height="42" viewBox="0 0 45 42"><rect x="1.2" y="1.2" width="42.6" height="39.6" fill="#fff" stroke="#6f6f6f" stroke-width="2.5"/><rect x="0" y="0" width="45" height="9" fill="#4fae85"/><rect x="6" y="14.0" width="33" height="3" fill="#3c3c3c"/><rect x="6" y="20.2" width="33" height="3" fill="#3c3c3c"/><rect x="6" y="26.4" width="33" height="3" fill="#3c3c3c"/><rect x="6" y="32.6" width="33" height="3" fill="#3c3c3c"/></svg>
<svg style="left:12px;top:262px;" width="37" height="44" viewBox="0 0 37 44"><path d="M1.5 1.5H25L35.5 12V42.5H1.5Z" fill="#fff" stroke="#6f6f6f" stroke-width="2.5"/><path d="M25 1.5V12H35.5" fill="#eee" stroke="#6f6f6f" stroke-width="2"/></svg>
<div class="t" style="left:19.9px;top:272.9px;font-size:33px;line-height:33px;color:#2f6db5;font-family:'Liberation Serif',serif;">Σ</div>
<svg style="left:303px;top:137px;" width="78" height="86" viewBox="0 0 78 86"><rect x="1" y="9" width="60" height="66" rx="5" fill="#ebb563"/><path d="M14 18H48L44 10H37Q35 2 31 2Q27 2 25 10H18Z" fill="#8a8a8a"/><circle cx="31" cy="8" r="2.5" fill="#f5f5f5"/><path d="M37 37H63L76 50V84H37Z" fill="#fff" stroke="#8c8c8c" stroke-width="2.5"/><path d="M63 37V50H76" fill="#f0f0f0" stroke="#8c8c8c" stroke-width="2"/><path d="M44 48H56M44 56H56M44 64H69M44 72H69" stroke="#3b74b8" stroke-width="2.5"/></svg>
<svg style="left:437px;top:137px;" width="45" height="44" viewBox="0 0 45 44"><path d="M1.5 1.5H16L24 9V30H1.5Z" fill="#fafafa" stroke="#b4b4b4" stroke-width="2"/><path d="M6 11H12M6 16H12M6 21H12M6 26H12" stroke="#8fb3dc" stroke-width="2" stroke-dasharray="4 2"/><path d="M17.5 14.5H33L43 24V42.5H17.5Z" fill="#fff" stroke="#8c8c8c" stroke-width="2.5"/><path d="M33 14.5V24H43" fill="#eee" stroke="#8c8c8c" stroke-width="2"/><path d="M23 24H30M23 30H38M23 36H38" stroke="#3b74b8" stroke-width="2.5"/></svg>
<svg style="left:438px;top:199px;" width="42" height="45" viewBox="0 0 42 45"><path d="M5 1Q8 16 22 30L26 26Q14 12 5 1Z" fill="#6f6f6f"/><path d="M37 1Q34 16 20 30L16 26Q28 12 37 1Z" fill="#6f6f6f"/><ellipse cx="11" cy="35" rx="8" ry="6.5" fill="none" stroke="#3b74b8" stroke-width="5"/><ellipse cx="31" cy="35" rx="8" ry="6.5" fill="none" stroke="#3b74b8" stroke-width="5"/></svg>
<svg style="left:739px;top:137px;" width="86" height="85" viewBox="0 0 86 85"><g transform="translate(0,0)"><rect x="1.25" y="1.25" width="49.5" height="23.5" fill="#fff" stroke="#6f6f6f" stroke-width="2.5"/><path d="M17.3 2.5V23.5" stroke="#9a9a9a" stroke-width="2"/><path d="M34.7 2.5V23.5" stroke="#9a9a9a" stroke-width="2"/><path d="M2.5 13.0H49.5" stroke="#9a9a9a" stroke-width="2"/></g><g transform="translate(0,58)"><rect x="1.25" y="1.25" width="49.5" height="23.5" fill="#fff" stroke="#6f6f6f" stroke-width="2.5"/><path d="M17.3 2.5V23.5" stroke="#9a9a9a" stroke-width="2"/><path d="M34.7 2.5V23.5" stroke="#9a9a9a" stroke-width="2"/><path d="M2.5 13.0H49.5" stroke="#9a9a9a" stroke-width="2"/></g><rect x="33" y="34" width="51" height="17" fill="#cfeaff" stroke="#5a7fa0" stroke-width="2.5"/><path d="M50 36V49M67 36V49" stroke="#a8cbe8" stroke-width="2"/><path d="M12 42L26 30V37H36V47H26V54Z" fill="#444"/></svg>
<svg style="left:954px;top:143px;" width="89" height="69" viewBox="0 0 89 69"><g transform="translate(9,0)"><rect x="1.25" y="1.25" width="76.5" height="65.5" fill="#fff" stroke="#6f6f6f" stroke-width="2.5"/><path d="M19.8 2.5V65.5" stroke="#9a9a9a" stroke-width="2"/><path d="M39.5 2.5V65.5" stroke="#9a9a9a" stroke-width="2"/><path d="M59.2 2.5V65.5" stroke="#9a9a9a" stroke-width="2"/><path d="M2.5 17.0H76.5" stroke="#9a9a9a" stroke-width="2"/><path d="M2.5 34.0H76.5" stroke="#9a9a9a" stroke-width="2"/><path d="M2.5 51.0H76.5" stroke="#9a9a9a" stroke-width="2"/></g><rect x="10" y="17" width="77" height="17.5" fill="#cfeaff" stroke="#5a7fa0" stroke-width="2.5"/><path d="M29 19V33M48 19V33M68 19V33" stroke="#a8cbe8" stroke-width="2"/><path d="M4 8L23 29M23 8L4 29" stroke="#cf4726" stroke-width="8"/></svg>
<svg style="left:1110px;top:137px;" width="45" height="44" viewBox="0 0 45 44"><rect x="1.25" y="1.25" width="42.5" height="41.5" fill="#fff" stroke="#6f6f6f" stroke-width="2.5"/><path d="M15.0 2.5V41.5" stroke="#c0c0c0" stroke-width="2"/><path d="M30.0 2.5V41.5" stroke="#c0c0c0" stroke-width="2"/><rect x="1.2" y="22" width="42.6" height="12" fill="#cfeaff" stroke="#5a7fa0" stroke-width="2.5"/><path d="M2 38H43" stroke="#c0c0c0" stroke-width="1.5"/><path d="M22.5 5L34 17H27V26H18V17H11Z" fill="#444"/></svg>
<svg style="left:1110px;top:200px;" width="45" height="44" viewBox="0 0 45 44"><rect x="1.25" y="1.25" width="42.5" height="41.5" fill="#fff" stroke="#6f6f6f" stroke-width="2.5"/><path d="M15.0 2.5V41.5" stroke="#c0c0c0" stroke-width="2"/><path d="M30.0 2.5V41.5" stroke="#c0c0c0" stroke-width="2"/><rect x="1.2" y="9" width="42.6" height="12" fill="#cfeaff" stroke="#5a7fa0" stroke-width="2.5"/><path d="M22.5 39L34 27H27V18H18V27H11Z" fill="#444"/></svg>
<svg style="left:1110px;top:262px;" width="37" height="45" viewBox="0 0 37 45"><rect x="1.25" y="1.25" width="34.5" height="42.5" fill="#fff" stroke="#6f6f6f" stroke-width="2.5"/><path d="M12.3 2.5V42.5" stroke="#c0c0c0" stroke-width="2"/><path d="M24.7 2.5V42.5" stroke="#c0c0c0" stroke-width="2"/><rect x="1.2" y="11" width="34.6" height="32.5" fill="#cfeaff" stroke="#5a7fa0" stroke-width="2.5"/><path d="M18.5 39L30 26H23V15H14V26H7Z" fill="#444"/></svg>
<svg style="left:1463px;top:145px;" width="92" height="82" viewBox="0 0 92 82"><rect x="1.25" y="1.25" width="80.5" height="65.5" fill="#fff" stroke="#6f6f6f" stroke-width="2.5"/><path d="M20.8 2.5V65.5" stroke="#9a9a9a" stroke-width="2"/><path d="M41.5 2.5V65.5" stroke="#9a9a9a" stroke-width="2"/><path d="M62.2 2.5V65.5" stroke="#9a9a9a" stroke-width="2"/><path d="M2.5 17.0H80.5" stroke="#9a9a9a" stroke-width="2"/><path d="M2.5 34.0H80.5" stroke="#9a9a9a" stroke-width="2"/><path d="M2.5 51.0H80.5" stroke="#9a9a9a" stroke-width="2"/><rect x="1.2" y="17" width="80.6" height="17.5" fill="#cfeaff" stroke="#4f7898" stroke-width="2.8"/><path d="M21 19V33M42 19V33M62 19V33" stroke="#a8cbe8" stroke-width="2"/><g transform="translate(34,78) rotate(-44.5)"><path d="M0 0L15.4 -7.0V7.0Z" fill="#3b74b8"/><rect x="18.9" y="-7.0" width="44.2" height="14" fill="#3b74b8"/><rect x="65.9" y="-7.0" width="9.8" height="14" rx="2" fill="#3b74b8"/></g></svg>
<svg style="left:1700px;top:145px;" width="90" height="78" viewBox="0 0 90 78"><rect x="1.25" y="1.25" width="85.5" height="65.5" fill="#fff" stroke="#6f6f6f" stroke-width="2.5"/><path d="M22.0 2.5V65.5" stroke="#9a9a9a" stroke-width="2"/><path d="M44.0 2.5V65.5" stroke="#9a9a9a" stroke-width="2"/><path d="M66.0 2.5V65.5" stroke="#9a9a9a" stroke-width="2"/><path d="M2.5 17.0H85.5" stroke="#9a9a9a" stroke-width="2"/><path d="M2.5 34.0H85.5" stroke="#9a9a9a" stroke-width="2"/><path d="M2.5 51.0H85.5" stroke="#9a9a9a" stroke-width="2"/><rect x="1.2" y="17" width="85.6" height="17.5" fill="#cfeaff" stroke="#4f7898" stroke-width="2.8"/><path d="M22 19V33M44 19V33M66 19V33" stroke="#a8cbe8" stroke-width="2"/><rect x="53.5" y="45.5" width="31" height="31" fill="#fff" stroke="#8c8c8c" stroke-width="3"/><path d="M59 61L66 69L80 53" fill="none" stroke="#2fa26f" stroke-width="6"/></svg>
<svg style="left:1955px;top:135px;" width="92" height="92" viewBox="0 0 92 92"><g transform="translate(8,11)"><rect x="1.25" y="1.25" width="47.5" height="37.5" fill="#fff" stroke="#6f6f6f" stroke-width="2.5"/><path d="M25.0 2.5V37.5" stroke="#9a9a9a" stroke-width="2"/><path d="M2.5 20.0H47.5" stroke="#9a9a9a" stroke-width="2"/></g><g transform="translate(40,46)"><rect x="1.25" y="1.25" width="45.5" height="29.5" fill="#fff" stroke="#6f6f6f" stroke-width="2.5"/><path d="M24.0 2.5V29.5" stroke="#9a9a9a" stroke-width="2"/><path d="M2.5 16.0H45.5" stroke="#9a9a9a" stroke-width="2"/></g><path d="M40 46V66" stroke="#f5f5f5" stroke-width="4"/><polygon points="67.5,1.0 73.1,16.3 89.4,16.9 76.5,26.9 81.0,42.6 67.5,33.5 54.0,42.6 58.5,26.9 45.6,16.9 61.9,16.3" fill="#ebb563"/><path d="M2 48L48 88H2Z" fill="#ebb563"/><path d="M12 84H40" stroke="#a87820" stroke-width="2" stroke-dasharray="2 3"/><g transform="translate(7,84) rotate(-44.2)"><path d="M0 0L13.2 -6.0V6.0Z" fill="#2a62b0"/><rect x="16.2" y="-6.0" width="21.8" height="12" fill="#2a62b0"/><rect x="40.4" y="-6.0" width="8.4" height="12" rx="2" fill="#2a62b0"/></g></svg>
<svg style="left:2132px;top:137px;" width="46" height="44" viewBox="0 0 46 44"><path d="M1 22H18V43H1Z M28 22H45V43H28Z" fill="#5c5c5c"/><path d="M5 22L8 6H17L19 22Z M41 22L38 6H29L27 22Z" fill="#5c5c5c"/><rect x="9" y="1" width="8" height="6" fill="#5c5c5c"/><rect x="29" y="1" width="8" height="6" fill="#5c5c5c"/><rect x="17" y="14" width="12" height="14" fill="#5c5c5c"/><rect x="11" y="27" width="4" height="14" fill="#e8e8e8"/><rect x="38" y="27" width="4" height="14" fill="#e8e8e8"/><rect x="11" y="11" width="3" height="7" fill="#e8e8e8"/><rect x="31" y="11" width="3" height="7" fill="#e8e8e8"/></svg>
<svg style="left:2137px;top:199px;" width="34" height="46" viewBox="0 0 34 46"><path d="M2 1V38L11 30L17 44L24 41L18 28L31 28Z" fill="#777"/></svg>
<svg style="left:2466px;top:143px;" width="92" height="84" viewBox="0 0 92 84"><rect x="1.25" y="1.25" width="79.5" height="65.5" fill="#fff" stroke="#6f6f6f" stroke-width="2.5"/><path d="M27.3 2.5V65.5" stroke="#9a9a9a" stroke-width="2"/><path d="M54.7 2.5V65.5" stroke="#9a9a9a" stroke-width="2"/><path d="M2.5 13.6H79.5" stroke="#9a9a9a" stroke-width="2"/><path d="M2.5 27.2H79.5" stroke="#9a9a9a" stroke-width="2"/><path d="M2.5 40.8H79.5" stroke="#9a9a9a" stroke-width="2"/><path d="M2.5 54.4H79.5" stroke="#9a9a9a" stroke-width="2"/><rect x="0" y="0" width="82" height="13" fill="#3b74b8"/><path d="M27.5 0V13M55 0V13" stroke="#5f8fcc" stroke-width="1.5"/><path d="M86 22L88 40L62 64L52 54Z" fill="#858585"/><path d="M58 50L66 58" stroke="#f5f5f5" stroke-width="2.5"/><path d="M52 56L60 65Q56 80 30 81Q44 70 44 60Q46 55 52 56Z" fill="#3b74b8"/></svg>
<svg style="left:2618px;top:137px;" width="46" height="44" viewBox="0 0 46 44"><g><rect x="1.25" y="1.25" width="38.5" height="37.5" fill="#fff" stroke="#6f6f6f" stroke-width="2.5"/><path d="M13.7 2.5V37.5" stroke="#9a9a9a" stroke-width="2"/><path d="M27.3 2.5V37.5" stroke="#9a9a9a" stroke-width="2"/><path d="M2.5 10.0H38.5" stroke="#9a9a9a" stroke-width="2"/><path d="M2.5 20.0H38.5" stroke="#9a9a9a" stroke-width="2"/><path d="M2.5 30.0H38.5" stroke="#9a9a9a" stroke-width="2"/></g><rect x="0" y="0" width="41" height="8" fill="#3b74b8"/><rect x="22" y="20" width="22" height="24" fill="#f5f5f5"/><g transform="translate(14,43) rotate(-45.0)"><path d="M0 0L12.1 -5.5V5.5Z" fill="#3b74b8"/><rect x="14.9" y="-5.5" width="17.7" height="11" fill="#3b74b8"/><rect x="34.7" y="-5.5" width="7.7" height="11" rx="2" fill="#3b74b8"/></g><path d="M36 11L46 21" stroke="#f5f5f5" stroke-width="2"/></svg>
<div class="t" style="left:2615.0px;top:200.0px;font-size:45px;line-height:45px;color:#444;font-weight:bold;font-family:'Liberation Serif',serif;">A</div>
<div class="t" style="left:2642.0px;top:202.9px;font-size:39px;line-height:39px;color:#444;font-weight:bold;font-family:'Liberation Serif',serif;">a</div>
<svg style="left:2618px;top:262px;" width="46" height="45" viewBox="0 0 46 45"><path d="M9 1V13H36V1" fill="#fff" stroke="#6f6f6f" stroke-width="2.5"/><path d="M15 5H30M15 9H30" stroke="#8c8c8c" stroke-width="2"/><path d="M9 44V31H36V44" fill="#fff" stroke="#6f6f6f" stroke-width="2.5"/><path d="M15 36H30M15 40H30" stroke="#8c8c8c" stroke-width="2"/><path d="M1 15L8 22L1 29Z" fill="#3b74b8"/><path d="M45 15L38 22L45 29Z" fill="#3b74b8"/><path d="M11 22H34" stroke="#c8c8c8" stroke-width="2" stroke-dasharray="3 3"/></svg>
<svg style="left:3100px;top:135px;" width="92" height="84" viewBox="0 0 92 84"><path d="M8 47L37 11L58 40" fill="none" stroke="#6f6f6f" stroke-width="9" stroke-linejoin="miter"/><path d="M27 49L56 80L82 52" fill="none" stroke="#6f6f6f" stroke-width="9" stroke-linejoin="miter"/><rect x="45" y="16" width="48" height="24" fill="#f5f5f5"/><rect x="45" y="40" width="44" height="20" fill="#f5f5f5"/><path d="M48 39L58 39L58 49Z" fill="#6f6f6f"/><path d="M50 21.5H88M69 2V41" stroke="#4db089" stroke-width="10"/><rect x="50" y="46" width="38" height="10" fill="#cf4a2c"/></svg>
<svg style="left:3283px;top:139px;" width="38" height="40" viewBox="0 0 38 40"><g transform="translate(1,0)"><path d="M0 18L18 1L36 18H27L18 10L9 18Z" fill="#6f6f6f"/></g><g transform="translate(2,0)"><path d="M0 22L18 39L36 22H27L18 30L9 22Z" fill="#6f6f6f"/></g></svg>
<svg style="left:3284px;top:204px;" width="38" height="36" viewBox="0 0 38 36"><g transform="translate(1,0)"><path d="M0 18L18 1L36 18H27L18 10L9 18Z" fill="#6f6f6f"/><path d="M0 34L18 17L36 34H27L18 26L9 34Z" fill="#6f6f6f"/></g></svg>
<svg style="left:3284px;top:267px;" width="38" height="36" viewBox="0 0 38 36"><g transform="translate(1,0)"><path d="M0 1L18 18L36 1H27L18 9L9 1Z" fill="#6f6f6f"/><path d="M0 17L18 34L36 17H27L18 25L9 17Z" fill="#6f6f6f"/></g></svg>
<svg style="left:3620px;top:201px;" width="44" height="44" viewBox="0 0 44 44"><path d="M1 1H43L27 20V43H17V20Z" fill="#6f6f6f"/><path d="M20 20V42H23V20L36 4H33Z" fill="#c8c8c8"/></svg>
<div style="left:782px;top:440px;width:3380px;height:1971px;background:#fff;"></div>
<div style="left:782px;top:440px;width:3380px;height:5px;background:#7a7a7a;background:linear-gradient(#8a8a8a,#6a6a6a 60%,#9a9a9a);"></div>
<div style="left:782px;top:440px;width:4px;height:1971px;background:#8a8a8a;"></div>
<div style="left:786px;top:445px;width:3325.5px;height:102px;background:#e6e6e6;"></div>
<div style="left:2356px;top:445px;width:217px;height:102px;background:#d2d2d2;"></div>
<div style="left:2356px;top:543px;width:217px;height:5px;background:#217346;"></div>
<div style="left:786px;top:546.5px;width:3325.5px;height:2px;background:#b4b4b4;"></div>
<svg style="left:814px;top:508px;" width="34" height="30" viewBox="0 0 34 30"><path d="M34 0V30H0Z" fill="#b8b8b8"/></svg>
<div class="t" style="left:865.0px;top:480.6px;font-size:30.5px;line-height:30.5px;color:#1c1c1c;letter-spacing:-1.64px;">Code</div>
<div class="t" style="left:1261.3px;top:480.6px;font-size:30.5px;line-height:30.5px;color:#1c1c1c;">S</div>
<div class="t" style="left:1304.0px;top:477.2px;font-size:38.4px;line-height:38.4px;color:#1c1c1c;letter-spacing:-0.26px;">Omschrijving</div>
<div class="t" style="left:2398.0px;top:480.6px;font-size:30.5px;line-height:30.5px;color:#2f8a6c;letter-spacing:-0.86px;">Hoeveelheid</div>
<div class="t" style="left:2651.0px;top:480.6px;font-size:30.5px;line-height:30.5px;color:#1c1c1c;letter-spacing:-2.63px;">Ehd</div>
<div class="t" style="left:2835.0px;top:480.6px;font-size:30.5px;line-height:30.5px;color:#1c1c1c;letter-spacing:-1.94px;">Uurnorm</div>
<div class="t" style="left:2963.0px;top:464.6px;font-size:30.5px;line-height:30.5px;color:#1c1c1c;letter-spacing:-1.30px;">Uurloon</div>
<div class="t" style="left:2963.0px;top:499.6px;font-size:30.5px;line-height:30.5px;color:#1c1c1c;letter-spacing:-0.71px;">code</div>
<div class="t" style="left:3222.0px;top:480.6px;font-size:30.5px;line-height:30.5px;color:#1c1c1c;letter-spacing:-2.04px;">Uren</div>
<div class="t" style="left:3336.0px;top:480.6px;font-size:30.5px;line-height:30.5px;color:#1c1c1c;letter-spacing:-1.34px;">Materiaalprijs</div>
<div class="t" style="left:3553.0px;top:480.6px;font-size:30.5px;line-height:30.5px;color:#1c1c1c;letter-spacing:-1.34px;">Materieelprijs</div>
<div class="t" style="left:3783.0px;top:480.6px;font-size:30.5px;line-height:30.5px;color:#1c1c1c;letter-spacing:-0.90px;">Onderaann.</div>
<div style="left:3948px;top:445px;width:163.5px;height:102px;overflow:hidden">
<div class="t" style="left:38.0px;top:35.6px;font-size:30.5px;line-height:30.5px;color:#1c1c1c;letter-spacing:-1.26px;">Eenheidsprijs</div>
</div>
<div style="left:786px;top:547.2px;width:72px;height:49.03px;background:#e6e6e6;"></div>
<div class="t" style="left:804.5px;top:554.6px;font-size:32px;line-height:32px;color:#222;letter-spacing:-2.59px;">42</div>
<div style="left:786px;top:595.23px;width:72px;height:2px;background:#c0c0c0;"></div>
<div style="left:858px;top:595.03px;width:3253.5px;height:2.4px;background:#d4d4d4;"></div>
<div class="t" style="left:1331.0px;top:552.0px;font-size:38.4px;line-height:38.4px;color:#141414;letter-spacing:-0.36px;">Voegmortel</div>
<div class="t" style="left:2488.4px;top:553.8px;font-size:30.5px;line-height:30.5px;color:#0c0c0c;letter-spacing:-0.94px;">0,396</div>
<div class="t" style="left:2652.0px;top:553.8px;font-size:30.5px;line-height:30.5px;color:#0c0c0c;letter-spacing:-2.08px;">m3</div>
<div class="t" style="left:3427.4px;top:553.8px;font-size:30.5px;line-height:30.5px;color:#0c0c0c;letter-spacing:-0.94px;">52,18</div>
<div style="left:3948px;top:547.2px;width:163.5px;height:49.03px;overflow:hidden">
<div class="t" style="left:133.7px;top:6.6px;font-size:30.5px;line-height:30.5px;color:#0c0c0c;letter-spacing:-1.66px;">52</div>
</div>
<svg style="left:2575px;top:549.2px;" width="46" height="44" viewBox="0 0 46 44"><path d="M1 1H45L1 43Z" fill="#f0b868"/><path d="M8 8H26L8 25Z" fill="#fff"/><path d="M4 5H40" stroke="#7a5a20" stroke-width="2" stroke-dasharray="2 4"/><path d="M4 6V36" stroke="#7a5a20" stroke-width="2" stroke-dasharray="2 4"/></svg>
<div style="left:786px;top:596.23px;width:72px;height:49.03px;background:#e6e6e6;"></div>
<div class="t" style="left:804.5px;top:603.6px;font-size:32px;line-height:32px;color:#222;letter-spacing:-2.59px;">43</div>
<div style="left:786px;top:644.26px;width:72px;height:2px;background:#c0c0c0;"></div>
<div style="left:858px;top:644.06px;width:3253.5px;height:2.4px;background:#d4d4d4;"></div>
<div class="t" style="left:1331.0px;top:601.0px;font-size:38.4px;line-height:38.4px;color:#141414;letter-spacing:-0.52px;">Voegwerk</div>
<div class="t" style="left:2472.3px;top:602.8px;font-size:30.5px;line-height:30.5px;color:#0c0c0c;letter-spacing:-0.91px;">36,000</div>
<div class="t" style="left:2652.0px;top:602.8px;font-size:30.5px;line-height:30.5px;color:#0c0c0c;letter-spacing:-2.08px;">m2</div>
<div class="t" style="left:3879.6px;top:602.8px;font-size:30.5px;line-height:30.5px;color:#0c0c0c;letter-spacing:-0.97px;">3,40</div>
<div style="left:3948px;top:596.2px;width:163.5px;height:49.03px;overflow:hidden">
<div class="t" style="left:149.9px;top:6.6px;font-size:30.5px;line-height:30.5px;color:#0c0c0c;letter-spacing:-0.83px;">3</div>
</div>
<svg style="left:2575px;top:598.23px;" width="46" height="44" viewBox="0 0 46 44"><path d="M1 1H45L1 43Z" fill="#f0b868"/><path d="M8 8H26L8 25Z" fill="#fff"/><path d="M4 5H40" stroke="#7a5a20" stroke-width="2" stroke-dasharray="2 4"/><path d="M4 6V36" stroke="#7a5a20" stroke-width="2" stroke-dasharray="2 4"/></svg>
<div style="left:786px;top:645.26px;width:72px;height:49.03px;background:#e6e6e6;"></div>
<div class="t" style="left:804.5px;top:652.6px;font-size:32px;line-height:32px;color:#222;letter-spacing:-2.59px;">44</div>
<div style="left:786px;top:693.29px;width:72px;height:2px;background:#c0c0c0;"></div>
<div style="left:858px;top:693.09px;width:3253.5px;height:2.4px;background:#d4d4d4;"></div>
<div class="t" style="left:1331.0px;top:650.0px;font-size:38.4px;line-height:38.4px;color:#141414;letter-spacing:-0.50px;">Zoutzuur</div>
<div class="t" style="left:2488.4px;top:651.9px;font-size:30.5px;line-height:30.5px;color:#0c0c0c;letter-spacing:-0.94px;">7,200</div>
<div class="t" style="left:2652.0px;top:651.9px;font-size:30.5px;line-height:30.5px;color:#0c0c0c;letter-spacing:-0.62px;">ltr</div>
<div class="t" style="left:3443.6px;top:651.9px;font-size:30.5px;line-height:30.5px;color:#0c0c0c;letter-spacing:-0.97px;">0,25</div>
<div style="left:3948px;top:645.3px;width:163.5px;height:49.03px;overflow:hidden">
<div class="t" style="left:149.9px;top:6.6px;font-size:30.5px;line-height:30.5px;color:#0c0c0c;letter-spacing:-0.83px;">0</div>
</div>
<svg style="left:2575px;top:647.26px;" width="46" height="44" viewBox="0 0 46 44"><path d="M1 1H45L1 43Z" fill="#f0b868"/><path d="M8 8H26L8 25Z" fill="#fff"/><path d="M4 5H40" stroke="#7a5a20" stroke-width="2" stroke-dasharray="2 4"/><path d="M4 6V36" stroke="#7a5a20" stroke-width="2" stroke-dasharray="2 4"/></svg>
<div style="left:786px;top:694.29px;width:72px;height:49.03px;background:#e6e6e6;"></div>
<div class="t" style="left:804.5px;top:701.7px;font-size:32px;line-height:32px;color:#222;letter-spacing:-2.59px;">45</div>
<div style="left:786px;top:742.32px;width:72px;height:2px;background:#c0c0c0;"></div>
<div style="left:858px;top:742.12px;width:3253.5px;height:2.4px;background:#d4d4d4;"></div>
<div class="t" style="left:1331.0px;top:699.0px;font-size:38.4px;line-height:38.4px;color:#141414;letter-spacing:0.01px;">Doorstrijken binnenzijde</div>
<div class="t" style="left:2472.3px;top:700.9px;font-size:30.5px;line-height:30.5px;color:#0c0c0c;letter-spacing:-0.91px;">36,000</div>
<div class="t" style="left:2652.0px;top:700.9px;font-size:30.5px;line-height:30.5px;color:#0c0c0c;letter-spacing:-2.08px;">m2</div>
<div class="t" style="left:3879.6px;top:700.9px;font-size:30.5px;line-height:30.5px;color:#0c0c0c;letter-spacing:-0.97px;">1,59</div>
<div style="left:3948px;top:694.3px;width:163.5px;height:49.03px;overflow:hidden">
<div class="t" style="left:149.9px;top:6.6px;font-size:30.5px;line-height:30.5px;color:#0c0c0c;letter-spacing:-0.83px;">1</div>
</div>
<svg style="left:2575px;top:696.29px;" width="46" height="44" viewBox="0 0 46 44"><path d="M1 1H45L1 43Z" fill="#f0b868"/><path d="M8 8H26L8 25Z" fill="#fff"/><path d="M4 5H40" stroke="#7a5a20" stroke-width="2" stroke-dasharray="2 4"/><path d="M4 6V36" stroke="#7a5a20" stroke-width="2" stroke-dasharray="2 4"/></svg>
<div style="left:858px;top:744.52px;width:3253.5px;height:46.63px;background:#a9a9a9;"></div>
<div style="left:786px;top:743.32px;width:72px;height:49.03px;background:#e6e6e6;"></div>
<div class="t" style="left:804.5px;top:750.7px;font-size:32px;line-height:32px;color:#222;letter-spacing:-2.59px;">46</div>
<div style="left:786px;top:791.35px;width:72px;height:2px;background:#c0c0c0;"></div>
<div style="left:858px;top:791.15px;width:3253.5px;height:2.4px;background:#d4d4d4;"></div>
<div class="t" style="left:868.0px;top:749.9px;font-size:30.5px;line-height:30.5px;color:#0c0c0c;letter-spacing:-0.94px;font-weight:bold;">22.60</div>
<div class="t" style="left:1263.0px;top:749.9px;font-size:30.5px;line-height:30.5px;color:#0c0c0c;font-weight:bold;">2</div>
<div class="t" style="left:1317.0px;top:751.6px;font-size:27px;line-height:27px;color:#0c0c0c;letter-spacing:-0.36px;font-weight:bold;font-family:'DejaVu Sans','Liberation Sans',sans-serif;">Diversen</div>
<div class="t" style="left:2488.4px;top:749.4px;font-size:30.5px;line-height:30.5px;color:#0c0c0c;letter-spacing:-0.94px;font-weight:bold;">2,000</div>
<div class="t" style="left:2652.0px;top:749.4px;font-size:30.5px;line-height:30.5px;color:#0c0c0c;letter-spacing:-1.21px;font-weight:bold;">brg</div>
<div class="t" style="left:2885.6px;top:749.4px;font-size:30.5px;line-height:30.5px;color:#0c0c0c;letter-spacing:-0.97px;font-weight:bold;">0,80</div>
<div class="t" style="left:3226.1px;top:749.4px;font-size:30.5px;line-height:30.5px;color:#0c0c0c;letter-spacing:-0.97px;font-weight:bold;">1,60</div>
<div class="t" style="left:3411.3px;top:749.4px;font-size:30.5px;line-height:30.5px;color:#0c0c0c;letter-spacing:-0.91px;font-weight:bold;">180,78</div>
<div style="left:3948px;top:743.3px;width:163.5px;height:49.03px;overflow:hidden">
<div class="t" style="left:117.6px;top:6.1px;font-size:30.5px;line-height:30.5px;color:#0c0c0c;letter-spacing:-1.25px;font-weight:bold;">216</div>
</div>
<div style="left:786px;top:792.35px;width:72px;height:49.03px;background:#e6e6e6;"></div>
<div class="t" style="left:804.5px;top:799.7px;font-size:32px;line-height:32px;color:#222;letter-spacing:-2.59px;">47</div>
<div style="left:786px;top:840.38px;width:72px;height:2px;background:#c0c0c0;"></div>
<div style="left:858px;top:840.18px;width:3253.5px;height:2.4px;background:#d4d4d4;"></div>
<div class="t" style="left:1331.0px;top:797.1px;font-size:38.4px;line-height:38.4px;color:#141414;letter-spacing:-0.11px;">Dpc folie aansl. metselwerk/fund.</div>
<div class="t" style="left:2472.3px;top:799.0px;font-size:30.5px;line-height:30.5px;color:#0c0c0c;letter-spacing:-0.91px;">16,000</div>
<div class="t" style="left:2652.0px;top:799.0px;font-size:30.5px;line-height:30.5px;color:#0c0c0c;letter-spacing:-2.08px;">m1</div>
<div class="t" style="left:2885.6px;top:799.0px;font-size:30.5px;line-height:30.5px;color:#0c0c0c;letter-spacing:-0.97px;">0,10</div>
<div class="t" style="left:3226.1px;top:799.0px;font-size:30.5px;line-height:30.5px;color:#0c0c0c;letter-spacing:-0.97px;">1,60</div>
<div class="t" style="left:3443.6px;top:799.0px;font-size:30.5px;line-height:30.5px;color:#0c0c0c;letter-spacing:-0.97px;">1,13</div>
<div style="left:3948px;top:792.4px;width:163.5px;height:49.03px;overflow:hidden">
<div class="t" style="left:149.9px;top:6.6px;font-size:30.5px;line-height:30.5px;color:#0c0c0c;letter-spacing:-0.83px;">5</div>
</div>
<div style="left:786px;top:841.38px;width:72px;height:49.03px;background:#e6e6e6;"></div>
<div class="t" style="left:804.5px;top:848.8px;font-size:32px;line-height:32px;color:#222;letter-spacing:-2.59px;">48</div>
<div style="left:786px;top:889.41px;width:72px;height:2px;background:#c0c0c0;"></div>
<div style="left:858px;top:889.21px;width:3253.5px;height:2.4px;background:#d4d4d4;"></div>
<div class="t" style="left:868.0px;top:848.0px;font-size:30.5px;line-height:30.5px;color:#0c0c0c;letter-spacing:-0.94px;">100020457</div>
<div class="t" style="left:1331.0px;top:846.1px;font-size:38.4px;line-height:38.4px;color:#141414;letter-spacing:-0.16px;">Rockwool RockSono Base (210) 1200x600x45 mm</div>
<div class="t" style="left:2472.3px;top:848.0px;font-size:30.5px;line-height:30.5px;color:#0c0c0c;letter-spacing:-0.91px;">36,000</div>
<div class="t" style="left:2652.0px;top:848.0px;font-size:30.5px;line-height:30.5px;color:#0c0c0c;letter-spacing:-2.08px;">m2</div>
<div class="t" style="left:3443.6px;top:848.0px;font-size:30.5px;line-height:30.5px;color:#0c0c0c;letter-spacing:-0.97px;">9,54</div>
<div style="left:3948px;top:841.4px;width:163.5px;height:49.03px;overflow:hidden">
<div class="t" style="left:149.9px;top:6.6px;font-size:30.5px;line-height:30.5px;color:#0c0c0c;letter-spacing:-0.83px;">9</div>
</div>
<svg style="left:2575px;top:843.38px;" width="46" height="44" viewBox="0 0 46 44"><path d="M1 1H45L1 43Z" fill="#f0b868"/><path d="M8 8H26L8 25Z" fill="#fff"/><path d="M4 5H40" stroke="#7a5a20" stroke-width="2" stroke-dasharray="2 4"/><path d="M4 6V36" stroke="#7a5a20" stroke-width="2" stroke-dasharray="2 4"/></svg>
<div style="left:786px;top:890.41px;width:72px;height:49.03px;background:#e6e6e6;"></div>
<div class="t" style="left:804.5px;top:897.8px;font-size:32px;line-height:32px;color:#222;letter-spacing:-2.59px;">49</div>
<div style="left:786px;top:938.44px;width:72px;height:2px;background:#c0c0c0;"></div>
<div style="left:858px;top:938.24px;width:3253.5px;height:2.4px;background:#d4d4d4;"></div>
<div class="t" style="left:1266.5px;top:899.2px;font-size:21px;line-height:21px;color:#333;font-weight:bold;">&quot;</div>
<div class="t" style="left:1331.0px;top:895.2px;font-size:38.4px;line-height:38.4px;color:#141414;letter-spacing:0.09px;">Schraagsteiger in norm metselaar</div>
<div style="left:858px;top:940.64px;width:3253.5px;height:46.63px;background:#006400;"></div>
<div style="left:786px;top:939.44px;width:72px;height:49.03px;background:#e6e6e6;"></div>
<div class="t" style="left:804.5px;top:946.8px;font-size:32px;line-height:32px;color:#222;letter-spacing:-2.59px;">50</div>
<div style="left:786px;top:987.47px;width:72px;height:2px;background:#c0c0c0;"></div>
<div style="left:858px;top:987.27px;width:3253.5px;height:2.4px;background:#d4d4d4;"></div>
<div class="t" style="left:868.0px;top:946.1px;font-size:30.5px;line-height:30.5px;color:#fff;letter-spacing:-1.66px;font-weight:bold;">21</div>
<div class="t" style="left:1263.0px;top:946.1px;font-size:30.5px;line-height:30.5px;color:#fff;font-weight:bold;">1</div>
<div class="t" style="left:1304.0px;top:947.0px;font-size:28.5px;line-height:28.5px;color:#fff;letter-spacing:-0.38px;font-weight:bold;">BETONVLOER</div>
<div class="t" style="left:2488.4px;top:945.6px;font-size:30.5px;line-height:30.5px;color:#fff;letter-spacing:-0.94px;font-weight:bold;">2,000</div>
<div class="t" style="left:2652.0px;top:945.6px;font-size:30.5px;line-height:30.5px;color:#fff;letter-spacing:-1.21px;font-weight:bold;">brg</div>
<div class="t" style="left:2885.6px;top:945.6px;font-size:30.5px;line-height:30.5px;color:#fff;letter-spacing:-0.97px;font-weight:bold;">4,17</div>
<div class="t" style="left:3226.1px;top:945.6px;font-size:30.5px;line-height:30.5px;color:#fff;letter-spacing:-0.97px;font-weight:bold;">8,33</div>
<div class="t" style="left:3427.4px;top:945.6px;font-size:30.5px;line-height:30.5px;color:#fff;letter-spacing:-0.94px;font-weight:bold;">84,67</div>
<div class="t" style="left:3863.4px;top:945.6px;font-size:30.5px;line-height:30.5px;color:#fff;letter-spacing:-0.94px;font-weight:bold;">45,95</div>
<div style="left:3948px;top:939.4px;width:163.5px;height:49.03px;overflow:hidden">
<div class="t" style="left:117.6px;top:6.1px;font-size:30.5px;line-height:30.5px;color:#fff;letter-spacing:-1.25px;font-weight:bold;">318</div>
</div>
<div style="left:858px;top:989.67px;width:3253.5px;height:46.63px;background:#a9a9a9;"></div>
<div style="left:786px;top:988.47px;width:72px;height:49.03px;background:#e6e6e6;"></div>
<div class="t" style="left:804.5px;top:995.9px;font-size:32px;line-height:32px;color:#222;letter-spacing:-2.59px;">51</div>
<div style="left:786px;top:1036.5px;width:72px;height:2px;background:#c0c0c0;"></div>
<div style="left:858px;top:1036.3px;width:3253.5px;height:2.4px;background:#d4d4d4;"></div>
<div class="t" style="left:868.0px;top:995.1px;font-size:30.5px;line-height:30.5px;color:#0c0c0c;letter-spacing:-0.94px;font-weight:bold;">22.51</div>
<div class="t" style="left:1263.0px;top:995.1px;font-size:30.5px;line-height:30.5px;color:#0c0c0c;font-weight:bold;">2</div>
<div class="t" style="left:1317.0px;top:996.8px;font-size:27px;line-height:27px;color:#0c0c0c;letter-spacing:0.64px;font-weight:bold;font-family:'DejaVu Sans','Liberation Sans',sans-serif;">Metselwerk</div>
<div class="t" style="left:2488.4px;top:994.6px;font-size:30.5px;line-height:30.5px;color:#0c0c0c;letter-spacing:-0.94px;font-weight:bold;">3,200</div>
<div class="t" style="left:2652.0px;top:994.6px;font-size:30.5px;line-height:30.5px;color:#0c0c0c;letter-spacing:-2.17px;font-weight:bold;">m2</div>
<div class="t" style="left:2885.6px;top:994.6px;font-size:30.5px;line-height:30.5px;color:#0c0c0c;letter-spacing:-0.97px;font-weight:bold;">1,28</div>
<div class="t" style="left:3226.1px;top:994.6px;font-size:30.5px;line-height:30.5px;color:#0c0c0c;letter-spacing:-0.97px;font-weight:bold;">4,10</div>
<div class="t" style="left:3429.0px;top:994.6px;font-size:30.5px;line-height:30.5px;color:#0c0c0c;letter-spacing:-0.92px;font-weight:bold;">11,84</div>
<div style="left:3948px;top:988.5px;width:163.5px;height:49.03px;overflow:hidden">
<div class="t" style="left:133.7px;top:6.1px;font-size:30.5px;line-height:30.5px;color:#0c0c0c;letter-spacing:-1.66px;font-weight:bold;">69</div>
</div>
<div style="left:786px;top:1037.5px;width:72px;height:49.03px;background:#e6e6e6;"></div>
<div class="t" style="left:804.5px;top:1044.9px;font-size:32px;line-height:32px;color:#222;letter-spacing:-2.59px;">52</div>
<div style="left:786px;top:1085.53px;width:72px;height:2px;background:#c0c0c0;"></div>
<div style="left:858px;top:1085.33px;width:3253.5px;height:2.4px;background:#d4d4d4;"></div>
<div class="t" style="left:1331.0px;top:1042.3px;font-size:38.4px;line-height:38.4px;color:#141414;letter-spacing:0.14px;">Opmetselen gevelsteen tbv randkist</div>
<div class="t" style="left:2488.4px;top:1044.1px;font-size:30.5px;line-height:30.5px;color:#0c0c0c;letter-spacing:-0.94px;">0,240</div>
<div class="t" style="left:2652.0px;top:1044.1px;font-size:30.5px;line-height:30.5px;color:#0c0c0c;letter-spacing:-1.21px;">dzd</div>
<div class="t" style="left:2869.4px;top:1044.1px;font-size:30.5px;line-height:30.5px;color:#0c0c0c;letter-spacing:-0.94px;">15,00</div>
<div class="t" style="left:3226.1px;top:1044.1px;font-size:30.5px;line-height:30.5px;color:#0c0c0c;letter-spacing:-0.97px;">3,60</div>
<div class="t" style="left:3411.3px;top:1044.1px;font-size:30.5px;line-height:30.5px;color:#0c0c0c;letter-spacing:-0.91px;">136,13</div>
<div style="left:3948px;top:1037.5px;width:163.5px;height:49.03px;overflow:hidden">
<div class="t" style="left:119.8px;top:6.6px;font-size:30.5px;line-height:30.5px;color:#0c0c0c;letter-spacing:-1.19px;">811</div>
</div>
<div style="left:786px;top:1086.53px;width:72px;height:49.03px;background:#e6e6e6;"></div>
<div class="t" style="left:804.5px;top:1093.9px;font-size:32px;line-height:32px;color:#222;letter-spacing:-2.59px;">53</div>
<div style="left:786px;top:1134.56px;width:72px;height:2px;background:#c0c0c0;"></div>
<div style="left:858px;top:1134.36px;width:3253.5px;height:2.4px;background:#d4d4d4;"></div>
<div class="t" style="left:1331.0px;top:1091.3px;font-size:38.4px;line-height:38.4px;color:#141414;letter-spacing:-0.03px;">Maatvoering</div>
<div class="t" style="left:2488.4px;top:1093.1px;font-size:30.5px;line-height:30.5px;color:#0c0c0c;letter-spacing:-0.94px;">1,000</div>
<div class="t" style="left:2652.0px;top:1093.1px;font-size:30.5px;line-height:30.5px;color:#0c0c0c;letter-spacing:-1.00px;">pst</div>
<div class="t" style="left:2885.6px;top:1093.1px;font-size:30.5px;line-height:30.5px;color:#0c0c0c;letter-spacing:-0.97px;">0,50</div>
<div class="t" style="left:3226.1px;top:1093.1px;font-size:30.5px;line-height:30.5px;color:#0c0c0c;letter-spacing:-0.97px;">0,50</div>
<div style="left:3948px;top:1086.5px;width:163.5px;height:49.03px;overflow:hidden">
<div class="t" style="left:133.7px;top:6.6px;font-size:30.5px;line-height:30.5px;color:#0c0c0c;letter-spacing:-1.66px;">22</div>
</div>
<div style="left:786px;top:1135.56px;width:72px;height:49.03px;background:#e6e6e6;"></div>
<div class="t" style="left:804.5px;top:1142.9px;font-size:32px;line-height:32px;color:#222;letter-spacing:-2.59px;">54</div>
<div style="left:786px;top:1183.59px;width:72px;height:2px;background:#c0c0c0;"></div>
<div style="left:858px;top:1183.39px;width:3253.5px;height:2.4px;background:#d4d4d4;"></div>
<div class="t" style="left:1331.0px;top:1140.3px;font-size:38.4px;line-height:38.4px;color:#141414;letter-spacing:-0.19px;">Metselspecie</div>
<div class="t" style="left:2488.4px;top:1142.2px;font-size:30.5px;line-height:30.5px;color:#0c0c0c;letter-spacing:-0.94px;">0,100</div>
<div class="t" style="left:2652.0px;top:1142.2px;font-size:30.5px;line-height:30.5px;color:#0c0c0c;letter-spacing:-2.08px;">m3</div>
<div class="t" style="left:3427.4px;top:1142.2px;font-size:30.5px;line-height:30.5px;color:#0c0c0c;letter-spacing:-0.94px;">52,18</div>
<div style="left:3948px;top:1135.6px;width:163.5px;height:49.03px;overflow:hidden">
<div class="t" style="left:133.7px;top:6.6px;font-size:30.5px;line-height:30.5px;color:#0c0c0c;letter-spacing:-1.66px;">52</div>
</div>
<div style="left:858px;top:1185.79px;width:3253.5px;height:46.63px;background:#a9a9a9;"></div>
<div style="left:786px;top:1184.59px;width:72px;height:49.03px;background:#f0f0f0;"></div>
<div class="t" style="left:804.5px;top:1192.0px;font-size:32px;line-height:32px;color:#2a7d5a;letter-spacing:-2.59px;">55</div>
<div style="left:853px;top:1184.59px;width:6px;height:49.03px;background:#217346;"></div>
<div style="left:786px;top:1232.62px;width:72px;height:2px;background:#c0c0c0;"></div>
<div style="left:858px;top:1232.42px;width:3253.5px;height:2.4px;background:#d4d4d4;"></div>
<div class="t" style="left:868.0px;top:1191.2px;font-size:30.5px;line-height:30.5px;color:#0c0c0c;letter-spacing:-0.94px;font-weight:bold;">21.50</div>
<div class="t" style="left:1263.0px;top:1191.2px;font-size:30.5px;line-height:30.5px;color:#0c0c0c;font-weight:bold;">2</div>
<div class="t" style="left:1317.0px;top:1192.9px;font-size:27px;line-height:27px;color:#0c0c0c;letter-spacing:0.11px;font-weight:bold;font-family:'DejaVu Sans','Liberation Sans',sans-serif;">Betonwerk</div>
<div class="t" style="left:2472.3px;top:1190.7px;font-size:30.5px;line-height:30.5px;color:#0c0c0c;letter-spacing:-0.91px;font-weight:bold;">12,000</div>
<div class="t" style="left:2652.0px;top:1190.7px;font-size:30.5px;line-height:30.5px;color:#0c0c0c;letter-spacing:-2.17px;font-weight:bold;">m2</div>
<div class="t" style="left:2885.6px;top:1190.7px;font-size:30.5px;line-height:30.5px;color:#0c0c0c;letter-spacing:-0.97px;font-weight:bold;">0,35</div>
<div class="t" style="left:3226.1px;top:1190.7px;font-size:30.5px;line-height:30.5px;color:#0c0c0c;letter-spacing:-0.97px;font-weight:bold;">4,23</div>
<div class="t" style="left:3427.4px;top:1190.7px;font-size:30.5px;line-height:30.5px;color:#0c0c0c;letter-spacing:-0.94px;font-weight:bold;">10,95</div>
<div class="t" style="left:3879.6px;top:1190.7px;font-size:30.5px;line-height:30.5px;color:#0c0c0c;letter-spacing:-0.97px;font-weight:bold;">7,66</div>
<div style="left:3948px;top:1184.6px;width:163.5px;height:49.03px;overflow:hidden">
<div class="t" style="left:133.7px;top:6.1px;font-size:30.5px;line-height:30.5px;color:#0c0c0c;letter-spacing:-1.66px;font-weight:bold;">34</div>
</div>
<div style="left:786px;top:1233.62px;width:72px;height:49.03px;background:#e6e6e6;"></div>
<div class="t" style="left:804.5px;top:1241.0px;font-size:32px;line-height:32px;color:#222;letter-spacing:-2.59px;">56</div>
<div style="left:786px;top:1281.65px;width:72px;height:2px;background:#c0c0c0;"></div>
<div style="left:858px;top:1281.45px;width:3253.5px;height:2.4px;background:#d4d4d4;"></div>
<div class="t" style="left:1331.0px;top:1238.4px;font-size:38.4px;line-height:38.4px;color:#141414;letter-spacing:0.05px;">Egaliseren + storten werkvloer</div>
<div class="t" style="left:2488.4px;top:1240.2px;font-size:30.5px;line-height:30.5px;color:#0c0c0c;letter-spacing:-0.94px;">0,396</div>
<div class="t" style="left:2652.0px;top:1240.2px;font-size:30.5px;line-height:30.5px;color:#0c0c0c;letter-spacing:-2.08px;">m3</div>
<div class="t" style="left:2885.6px;top:1240.2px;font-size:30.5px;line-height:30.5px;color:#0c0c0c;letter-spacing:-0.97px;">3,00</div>
<div class="t" style="left:3226.1px;top:1240.2px;font-size:30.5px;line-height:30.5px;color:#0c0c0c;letter-spacing:-0.97px;">1,19</div>
<div class="t" style="left:3427.4px;top:1240.2px;font-size:30.5px;line-height:30.5px;color:#0c0c0c;letter-spacing:-0.94px;">52,18</div>
<div style="left:3948px;top:1233.6px;width:163.5px;height:49.03px;overflow:hidden">
<div class="t" style="left:117.6px;top:6.6px;font-size:30.5px;line-height:30.5px;color:#0c0c0c;letter-spacing:-1.25px;">187</div>
</div>
<svg style="left:2356px;top:1234.62px;" width="47" height="46" viewBox="0 0 47 46"><rect x="1" y="1" width="25" height="25" fill="#4db38c"/><path d="M6 5L21 22M21 5L6 22" stroke="#fff" stroke-width="4.5"/><path d="M28 4H42V12" fill="none" stroke="#8a8a8a" stroke-width="2"/><path d="M35 6V16M32 13L35 17L38 13" stroke="#8a8a8a" stroke-width="2" fill="none"/><rect x="2" y="30" width="12" height="12" fill="#fff" stroke="#7a7a7a" stroke-width="2.5"/><path d="M46 22V45H18Z" fill="#f0b060"/><path d="M27 26L41 40L33 40L41 32Z" fill="#2a62b8"/></svg>
<div style="left:786px;top:1282.65px;width:72px;height:49.03px;background:#e6e6e6;"></div>
<div class="t" style="left:804.5px;top:1290.0px;font-size:32px;line-height:32px;color:#222;letter-spacing:-2.59px;">57</div>
<div style="left:786px;top:1330.68px;width:72px;height:2px;background:#c0c0c0;"></div>
<div style="left:858px;top:1330.48px;width:3253.5px;height:2.4px;background:#d4d4d4;"></div>
<div class="t" style="left:1331.0px;top:1287.4px;font-size:38.4px;line-height:38.4px;color:#141414;letter-spacing:0.04px;">Wapeningsnetten 4.5kg/m2</div>
<div class="t" style="left:2472.3px;top:1289.3px;font-size:30.5px;line-height:30.5px;color:#0c0c0c;letter-spacing:-0.91px;">54,000</div>
<div class="t" style="left:2652.0px;top:1289.3px;font-size:30.5px;line-height:30.5px;color:#0c0c0c;letter-spacing:-1.58px;">kg</div>
<div class="t" style="left:2885.6px;top:1289.3px;font-size:30.5px;line-height:30.5px;color:#0c0c0c;letter-spacing:-0.97px;">0,01</div>
<div class="t" style="left:3226.1px;top:1289.3px;font-size:30.5px;line-height:30.5px;color:#0c0c0c;letter-spacing:-0.97px;">0,59</div>
<div class="t" style="left:3443.6px;top:1289.3px;font-size:30.5px;line-height:30.5px;color:#0c0c0c;letter-spacing:-0.97px;">0,57</div>
<div style="left:3948px;top:1282.7px;width:163.5px;height:49.03px;overflow:hidden">
<div class="t" style="left:149.9px;top:6.6px;font-size:30.5px;line-height:30.5px;color:#0c0c0c;letter-spacing:-0.83px;">1</div>
</div>
<svg style="left:2356px;top:1283.65px;" width="47" height="46" viewBox="0 0 47 46"><rect x="1" y="1" width="25" height="25" fill="#4db38c"/><path d="M6 5L21 22M21 5L6 22" stroke="#fff" stroke-width="4.5"/><path d="M28 4H42V12" fill="none" stroke="#8a8a8a" stroke-width="2"/><path d="M35 6V16M32 13L35 17L38 13" stroke="#8a8a8a" stroke-width="2" fill="none"/><rect x="2" y="30" width="12" height="12" fill="#fff" stroke="#7a7a7a" stroke-width="2.5"/><path d="M46 22V45H18Z" fill="#f0b060"/><path d="M27 26L41 40L33 40L41 32Z" fill="#2a62b8"/></svg>
<div style="left:786px;top:1331.68px;width:72px;height:49.03px;background:#e6e6e6;"></div>
<div class="t" style="left:804.5px;top:1339.1px;font-size:32px;line-height:32px;color:#222;letter-spacing:-2.59px;">58</div>
<div style="left:786px;top:1379.71px;width:72px;height:2px;background:#c0c0c0;"></div>
<div style="left:858px;top:1379.51px;width:3253.5px;height:2.4px;background:#d4d4d4;"></div>
<div class="t" style="left:1331.0px;top:1336.4px;font-size:38.4px;line-height:38.4px;color:#141414;letter-spacing:-0.05px;">Beton incl. verlies</div>
<div class="t" style="left:2488.4px;top:1338.3px;font-size:30.5px;line-height:30.5px;color:#0c0c0c;letter-spacing:-0.94px;">1,248</div>
<div class="t" style="left:2652.0px;top:1338.3px;font-size:30.5px;line-height:30.5px;color:#0c0c0c;letter-spacing:-2.08px;">m3</div>
<div class="t" style="left:2885.6px;top:1338.3px;font-size:30.5px;line-height:30.5px;color:#0c0c0c;letter-spacing:-0.97px;">1,00</div>
<div class="t" style="left:3226.1px;top:1338.3px;font-size:30.5px;line-height:30.5px;color:#0c0c0c;letter-spacing:-0.97px;">1,25</div>
<div class="t" style="left:3427.4px;top:1338.3px;font-size:30.5px;line-height:30.5px;color:#0c0c0c;letter-spacing:-0.94px;">53,32</div>
<div style="left:3948px;top:1331.7px;width:163.5px;height:49.03px;overflow:hidden">
<div class="t" style="left:133.7px;top:6.6px;font-size:30.5px;line-height:30.5px;color:#0c0c0c;letter-spacing:-1.66px;">98</div>
</div>
<svg style="left:2356px;top:1332.68px;" width="47" height="46" viewBox="0 0 47 46"><rect x="1" y="1" width="25" height="25" fill="#4db38c"/><path d="M6 5L21 22M21 5L6 22" stroke="#fff" stroke-width="4.5"/><path d="M28 4H42V12" fill="none" stroke="#8a8a8a" stroke-width="2"/><path d="M35 6V16M32 13L35 17L38 13" stroke="#8a8a8a" stroke-width="2" fill="none"/><rect x="2" y="30" width="12" height="12" fill="#fff" stroke="#7a7a7a" stroke-width="2.5"/><path d="M46 22V45H18Z" fill="#f0b060"/><path d="M27 26L41 40L33 40L41 32Z" fill="#2a62b8"/></svg>
<div style="left:786px;top:1380.71px;width:72px;height:49.03px;background:#e6e6e6;"></div>
<div class="t" style="left:804.5px;top:1388.1px;font-size:32px;line-height:32px;color:#222;letter-spacing:-2.59px;">59</div>
<div style="left:786px;top:1428.74px;width:72px;height:2px;background:#c0c0c0;"></div>
<div style="left:858px;top:1428.54px;width:3253.5px;height:2.4px;background:#d4d4d4;"></div>
<div class="t" style="left:1331.0px;top:1385.5px;font-size:38.4px;line-height:38.4px;color:#141414;letter-spacing:0.02px;">Direct afwerken vloer</div>
<div class="t" style="left:2472.3px;top:1387.3px;font-size:30.5px;line-height:30.5px;color:#0c0c0c;letter-spacing:-0.91px;">12,000</div>
<div class="t" style="left:2652.0px;top:1387.3px;font-size:30.5px;line-height:30.5px;color:#0c0c0c;letter-spacing:-2.08px;">m2</div>
<div class="t" style="left:2885.6px;top:1387.3px;font-size:30.5px;line-height:30.5px;color:#0c0c0c;letter-spacing:-0.97px;">0,10</div>
<div class="t" style="left:3226.1px;top:1387.3px;font-size:30.5px;line-height:30.5px;color:#0c0c0c;letter-spacing:-0.97px;">1,20</div>
<div class="t" style="left:3443.6px;top:1387.3px;font-size:30.5px;line-height:30.5px;color:#0c0c0c;letter-spacing:-0.97px;">1,13</div>
<div style="left:3948px;top:1380.7px;width:163.5px;height:49.03px;overflow:hidden">
<div class="t" style="left:149.9px;top:6.6px;font-size:30.5px;line-height:30.5px;color:#0c0c0c;letter-spacing:-0.83px;">5</div>
</div>
<svg style="left:2356px;top:1381.71px;" width="47" height="46" viewBox="0 0 47 46"><rect x="1" y="1" width="25" height="25" fill="#4db38c"/><path d="M6 5L21 22M21 5L6 22" stroke="#fff" stroke-width="4.5"/><path d="M28 4H42V12" fill="none" stroke="#8a8a8a" stroke-width="2"/><path d="M35 6V16M32 13L35 17L38 13" stroke="#8a8a8a" stroke-width="2" fill="none"/><rect x="2" y="30" width="12" height="12" fill="#fff" stroke="#7a7a7a" stroke-width="2.5"/><path d="M46 22V45H18Z" fill="#f0b060"/><path d="M27 26L41 40L33 40L41 32Z" fill="#2a62b8"/></svg>
<div style="left:786px;top:1429.74px;width:72px;height:49.03px;background:#e6e6e6;"></div>
<div class="t" style="left:804.5px;top:1437.1px;font-size:32px;line-height:32px;color:#222;letter-spacing:-2.59px;">60</div>
<div style="left:786px;top:1477.77px;width:72px;height:2px;background:#c0c0c0;"></div>
<div style="left:858px;top:1477.57px;width:3253.5px;height:2.4px;background:#d4d4d4;"></div>
<div class="t" style="left:1331.0px;top:1434.5px;font-size:38.4px;line-height:38.4px;color:#141414;letter-spacing:0.21px;">Kraanuren</div>
<div class="t" style="left:2488.4px;top:1436.4px;font-size:30.5px;line-height:30.5px;color:#0c0c0c;letter-spacing:-0.94px;">1,500</div>
<div class="t" style="left:2652.0px;top:1436.4px;font-size:30.5px;line-height:30.5px;color:#0c0c0c;letter-spacing:-1.08px;">uur</div>
<div class="t" style="left:3863.4px;top:1436.4px;font-size:30.5px;line-height:30.5px;color:#0c0c0c;letter-spacing:-0.94px;">61,26</div>
<div style="left:3948px;top:1429.7px;width:163.5px;height:49.03px;overflow:hidden">
<div class="t" style="left:133.7px;top:6.6px;font-size:30.5px;line-height:30.5px;color:#0c0c0c;letter-spacing:-1.66px;">61</div>
</div>
<svg style="left:2356px;top:1430.74px;" width="47" height="46" viewBox="0 0 47 46"><rect x="1" y="1" width="25" height="25" fill="#4db38c"/><path d="M6 5L21 22M21 5L6 22" stroke="#fff" stroke-width="4.5"/><path d="M28 4H42V12" fill="none" stroke="#8a8a8a" stroke-width="2"/><path d="M35 6V16M32 13L35 17L38 13" stroke="#8a8a8a" stroke-width="2" fill="none"/><rect x="2" y="30" width="12" height="12" fill="#fff" stroke="#7a7a7a" stroke-width="2.5"/><path d="M46 22V45H18Z" fill="#f0b060"/><path d="M27 26L41 40L33 40L41 32Z" fill="#2a62b8"/></svg>
<div style="left:858px;top:1479.97px;width:3253.5px;height:46.63px;background:#006400;"></div>
<div style="left:786px;top:1478.77px;width:72px;height:49.03px;background:#e6e6e6;"></div>
<div class="t" style="left:804.5px;top:1486.2px;font-size:32px;line-height:32px;color:#222;letter-spacing:-2.59px;">61</div>
<div style="left:786px;top:1526.8px;width:72px;height:2px;background:#c0c0c0;"></div>
<div style="left:858px;top:1526.6px;width:3253.5px;height:2.4px;background:#d4d4d4;"></div>
<div style="left:3948px;top:1478.8px;width:163.5px;height:49.03px;overflow:hidden">
<div class="t" style="left:117.6px;top:6.1px;font-size:30.5px;line-height:30.5px;color:#fff;letter-spacing:-1.25px;font-weight:bold;">404</div>
</div>
<div style="left:858px;top:1529px;width:3253.5px;height:46.63px;background:#a9a9a9;"></div>
<div style="left:786px;top:1527.8px;width:72px;height:49.03px;background:#e6e6e6;"></div>
<div class="t" style="left:804.5px;top:1535.2px;font-size:32px;line-height:32px;color:#222;letter-spacing:-2.59px;">62</div>
<div style="left:786px;top:1575.83px;width:72px;height:2px;background:#c0c0c0;"></div>
<div style="left:858px;top:1575.63px;width:3253.5px;height:2.4px;background:#d4d4d4;"></div>
<div style="left:3948px;top:1527.8px;width:163.5px;height:49.03px;overflow:hidden">
<div class="t" style="left:133.7px;top:6.1px;font-size:30.5px;line-height:30.5px;color:#0c0c0c;letter-spacing:-1.66px;font-weight:bold;">47</div>
</div>
<div style="left:786px;top:1576.83px;width:72px;height:49.03px;background:#e6e6e6;"></div>
<div class="t" style="left:804.5px;top:1584.2px;font-size:32px;line-height:32px;color:#222;letter-spacing:-2.59px;">63</div>
<div style="left:786px;top:1624.86px;width:72px;height:2px;background:#c0c0c0;"></div>
<div style="left:858px;top:1624.66px;width:3253.5px;height:2.4px;background:#d4d4d4;"></div>
<div style="left:3948px;top:1576.8px;width:163.5px;height:49.03px;overflow:hidden">
<div class="t" style="left:149.9px;top:6.6px;font-size:30.5px;line-height:30.5px;color:#0c0c0c;letter-spacing:-0.83px;">8</div>
</div>
<div style="left:786px;top:1625.86px;width:72px;height:49.03px;background:#e6e6e6;"></div>
<div class="t" style="left:804.5px;top:1633.2px;font-size:32px;line-height:32px;color:#222;letter-spacing:-2.59px;">64</div>
<div style="left:786px;top:1673.89px;width:72px;height:2px;background:#c0c0c0;"></div>
<div style="left:858px;top:1673.69px;width:3253.5px;height:2.4px;background:#d4d4d4;"></div>
<div style="left:3948px;top:1625.9px;width:163.5px;height:49.03px;overflow:hidden">
<div class="t" style="left:149.9px;top:6.6px;font-size:30.5px;line-height:30.5px;color:#0c0c0c;letter-spacing:-0.83px;">3</div>
</div>
<div style="left:786px;top:1674.89px;width:72px;height:49.03px;background:#e6e6e6;"></div>
<div class="t" style="left:804.5px;top:1682.3px;font-size:32px;line-height:32px;color:#222;letter-spacing:-2.59px;">65</div>
<div style="left:786px;top:1722.92px;width:72px;height:2px;background:#c0c0c0;"></div>
<div style="left:858px;top:1722.72px;width:3253.5px;height:2.4px;background:#d4d4d4;"></div>
<div style="left:3948px;top:1674.9px;width:163.5px;height:49.03px;overflow:hidden">
<div class="t" style="left:149.9px;top:6.6px;font-size:30.5px;line-height:30.5px;color:#0c0c0c;letter-spacing:-0.83px;">3</div>
</div>
<div style="left:786px;top:1723.92px;width:72px;height:49.03px;background:#e6e6e6;"></div>
<div class="t" style="left:804.5px;top:1731.3px;font-size:32px;line-height:32px;color:#222;letter-spacing:-2.59px;">66</div>
<div style="left:786px;top:1771.95px;width:72px;height:2px;background:#c0c0c0;"></div>
<div style="left:858px;top:1771.75px;width:3253.5px;height:2.4px;background:#d4d4d4;"></div>
<div style="left:3948px;top:1723.9px;width:163.5px;height:49.03px;overflow:hidden">
<div class="t" style="left:133.7px;top:6.6px;font-size:30.5px;line-height:30.5px;color:#0c0c0c;letter-spacing:-1.66px;">25</div>
</div>
<div style="left:858px;top:1774.15px;width:3253.5px;height:46.63px;background:#a9a9a9;"></div>
<div style="left:786px;top:1772.95px;width:72px;height:49.03px;background:#e6e6e6;"></div>
<div class="t" style="left:804.5px;top:1780.3px;font-size:32px;line-height:32px;color:#222;letter-spacing:-2.59px;">67</div>
<div style="left:786px;top:1820.98px;width:72px;height:2px;background:#c0c0c0;"></div>
<div style="left:858px;top:1820.78px;width:3253.5px;height:2.4px;background:#d4d4d4;"></div>
<div style="left:3948px;top:1773.0px;width:163.5px;height:49.03px;overflow:hidden">
<div class="t" style="left:133.7px;top:6.1px;font-size:30.5px;line-height:30.5px;color:#0c0c0c;letter-spacing:-1.66px;font-weight:bold;">79</div>
</div>
<div style="left:786px;top:1821.98px;width:72px;height:49.03px;background:#e6e6e6;"></div>
<div class="t" style="left:804.5px;top:1829.4px;font-size:32px;line-height:32px;color:#222;letter-spacing:-2.59px;">68</div>
<div style="left:786px;top:1870.01px;width:72px;height:2px;background:#c0c0c0;"></div>
<div style="left:858px;top:1869.81px;width:3253.5px;height:2.4px;background:#d4d4d4;"></div>
<div style="left:3948px;top:1822.0px;width:163.5px;height:49.03px;overflow:hidden">
<div class="t" style="left:117.6px;top:6.6px;font-size:30.5px;line-height:30.5px;color:#0c0c0c;letter-spacing:-1.25px;">158</div>
</div>
<div style="left:858px;top:1872.21px;width:3253.5px;height:46.63px;background:#006400;"></div>
<div style="left:786px;top:1871.01px;width:72px;height:49.03px;background:#e6e6e6;"></div>
<div class="t" style="left:804.5px;top:1878.4px;font-size:32px;line-height:32px;color:#222;letter-spacing:-2.59px;">69</div>
<div style="left:786px;top:1919.04px;width:72px;height:2px;background:#c0c0c0;"></div>
<div style="left:858px;top:1918.84px;width:3253.5px;height:2.4px;background:#d4d4d4;"></div>
<div style="left:3948px;top:1871.0px;width:163.5px;height:49.03px;overflow:hidden">
<div class="t" style="left:117.6px;top:6.1px;font-size:30.5px;line-height:30.5px;color:#fff;letter-spacing:-1.25px;font-weight:bold;">359</div>
</div>
<div style="left:858px;top:1921.24px;width:3253.5px;height:46.63px;background:#a9a9a9;"></div>
<div style="left:786px;top:1920.04px;width:72px;height:49.03px;background:#e6e6e6;"></div>
<div class="t" style="left:804.5px;top:1927.4px;font-size:32px;line-height:32px;color:#222;letter-spacing:-2.59px;">70</div>
<div style="left:786px;top:1968.07px;width:72px;height:2px;background:#c0c0c0;"></div>
<div style="left:858px;top:1967.87px;width:3253.5px;height:2.4px;background:#d4d4d4;"></div>
<div style="left:3948px;top:1920.0px;width:163.5px;height:49.03px;overflow:hidden">
<div class="t" style="left:117.6px;top:6.1px;font-size:30.5px;line-height:30.5px;color:#0c0c0c;letter-spacing:-1.25px;font-weight:bold;">298</div>
</div>
<div style="left:786px;top:1969.07px;width:72px;height:49.03px;background:#e6e6e6;"></div>
<div class="t" style="left:804.5px;top:1976.5px;font-size:32px;line-height:32px;color:#222;letter-spacing:-2.59px;">71</div>
<div style="left:786px;top:2017.1px;width:72px;height:2px;background:#c0c0c0;"></div>
<div style="left:858px;top:2016.9px;width:3253.5px;height:2.4px;background:#d4d4d4;"></div>
<div style="left:3948px;top:1969.1px;width:163.5px;height:49.03px;overflow:hidden">
<div class="t" style="left:119.8px;top:6.6px;font-size:30.5px;line-height:30.5px;color:#0c0c0c;letter-spacing:-1.19px;">113</div>
</div>
<div style="left:786px;top:2018.1px;width:72px;height:49.03px;background:#e6e6e6;"></div>
<div class="t" style="left:804.5px;top:2025.5px;font-size:32px;line-height:32px;color:#222;letter-spacing:-2.59px;">72</div>
<div style="left:786px;top:2066.13px;width:72px;height:2px;background:#c0c0c0;"></div>
<div style="left:858px;top:2065.93px;width:3253.5px;height:2.4px;background:#d4d4d4;"></div>
<div style="left:3948px;top:2018.1px;width:163.5px;height:49.03px;overflow:hidden">
<div class="t" style="left:117.6px;top:6.6px;font-size:30.5px;line-height:30.5px;color:#0c0c0c;letter-spacing:-1.25px;">155</div>
</div>
<div style="left:858px;top:2068.33px;width:3253.5px;height:46.63px;background:#a9a9a9;"></div>
<div style="left:786px;top:2067.13px;width:72px;height:49.03px;background:#e6e6e6;"></div>
<div class="t" style="left:804.5px;top:2074.5px;font-size:32px;line-height:32px;color:#222;letter-spacing:-2.59px;">73</div>
<div style="left:786px;top:2115.16px;width:72px;height:2px;background:#c0c0c0;"></div>
<div style="left:858px;top:2114.96px;width:3253.5px;height:2.4px;background:#d4d4d4;"></div>
<div style="left:3948px;top:2067.1px;width:163.5px;height:49.03px;overflow:hidden">
<div class="t" style="left:133.7px;top:6.1px;font-size:30.5px;line-height:30.5px;color:#0c0c0c;letter-spacing:-1.66px;font-weight:bold;">90</div>
</div>
<div style="left:786px;top:2116.16px;width:72px;height:49.03px;background:#e6e6e6;"></div>
<div class="t" style="left:804.5px;top:2123.5px;font-size:32px;line-height:32px;color:#222;letter-spacing:-2.59px;">74</div>
<div style="left:786px;top:2164.19px;width:72px;height:2px;background:#c0c0c0;"></div>
<div style="left:858px;top:2163.99px;width:3253.5px;height:2.4px;background:#d4d4d4;"></div>
<div style="left:3948px;top:2116.2px;width:163.5px;height:49.03px;overflow:hidden">
<div class="t" style="left:133.7px;top:6.6px;font-size:30.5px;line-height:30.5px;color:#0c0c0c;letter-spacing:-1.66px;">68</div>
</div>
<div style="left:786px;top:2165.19px;width:72px;height:49.03px;background:#e6e6e6;"></div>
<div class="t" style="left:804.5px;top:2172.6px;font-size:32px;line-height:32px;color:#222;letter-spacing:-2.59px;">75</div>
<div style="left:786px;top:2213.22px;width:72px;height:2px;background:#c0c0c0;"></div>
<div style="left:858px;top:2213.02px;width:3253.5px;height:2.4px;background:#d4d4d4;"></div>
<div style="left:3948px;top:2165.2px;width:163.5px;height:49.03px;overflow:hidden">
<div class="t" style="left:119.8px;top:6.6px;font-size:30.5px;line-height:30.5px;color:#0c0c0c;letter-spacing:-1.19px;">113</div>
</div>
<div style="left:858px;top:2215.42px;width:3253.5px;height:46.63px;background:#006400;"></div>
<div style="left:786px;top:2214.22px;width:72px;height:49.03px;background:#e6e6e6;"></div>
<div class="t" style="left:804.5px;top:2221.6px;font-size:32px;line-height:32px;color:#222;letter-spacing:-2.59px;">76</div>
<div style="left:786px;top:2262.25px;width:72px;height:2px;background:#c0c0c0;"></div>
<div style="left:858px;top:2262.05px;width:3253.5px;height:2.4px;background:#d4d4d4;"></div>
<div style="left:3948px;top:2214.2px;width:163.5px;height:49.03px;overflow:hidden">
<div class="t" style="left:93.4px;top:6.1px;font-size:30.5px;line-height:30.5px;color:#fff;letter-spacing:-0.94px;font-weight:bold;">1.500</div>
</div>
<div style="left:786px;top:2263.25px;width:72px;height:49.03px;background:#e6e6e6;"></div>
<div class="t" style="left:804.5px;top:2270.6px;font-size:32px;line-height:32px;color:#222;letter-spacing:-2.59px;">77</div>
<div style="left:786px;top:2311.28px;width:72px;height:2px;background:#c0c0c0;"></div>
<div style="left:858px;top:2311.08px;width:3253.5px;height:2.4px;background:#d4d4d4;"></div>
<div style="left:3948px;top:2263.2px;width:163.5px;height:49.03px;overflow:hidden">
<div class="t" style="left:93.4px;top:6.6px;font-size:30.5px;line-height:30.5px;color:#0c0c0c;letter-spacing:-0.94px;">1.500</div>
</div>
<div style="left:857px;top:445px;width:2px;height:102px;background:#b8b8b8;"></div>
<div style="left:857px;top:547px;width:2px;height:1765.28px;background:#d0d0d0;"></div>
<div style="left:1251px;top:445px;width:2px;height:102px;background:#b8b8b8;"></div>
<div style="left:1251px;top:547px;width:2px;height:1765.28px;background:#d0d0d0;"></div>
<div style="left:1292px;top:445px;width:2px;height:102px;background:#b8b8b8;"></div>
<div style="left:1292px;top:547px;width:2px;height:1765.28px;background:#d0d0d0;"></div>
<div style="left:2355px;top:445px;width:2px;height:102px;background:#b8b8b8;"></div>
<div style="left:2355px;top:547px;width:2px;height:1765.28px;background:#d0d0d0;"></div>
<div style="left:2572px;top:445px;width:2px;height:102px;background:#b8b8b8;"></div>
<div style="left:2572px;top:547px;width:2px;height:1765.28px;background:#d0d0d0;"></div>
<div style="left:2640px;top:445px;width:2px;height:102px;background:#b8b8b8;"></div>
<div style="left:2640px;top:547px;width:2px;height:1765.28px;background:#d0d0d0;"></div>
<div style="left:2735px;top:445px;width:2px;height:102px;background:#b8b8b8;"></div>
<div style="left:2735px;top:547px;width:2px;height:1765.28px;background:#d0d0d0;"></div>
<div style="left:2954px;top:445px;width:2px;height:102px;background:#b8b8b8;"></div>
<div style="left:2954px;top:547px;width:2px;height:1765.28px;background:#d0d0d0;"></div>
<div style="left:3076px;top:445px;width:2px;height:102px;background:#b8b8b8;"></div>
<div style="left:3076px;top:547px;width:2px;height:1765.28px;background:#d0d0d0;"></div>
<div style="left:3294px;top:445px;width:2px;height:102px;background:#b8b8b8;"></div>
<div style="left:3294px;top:547px;width:2px;height:1765.28px;background:#d0d0d0;"></div>
<div style="left:3512px;top:445px;width:2px;height:102px;background:#b8b8b8;"></div>
<div style="left:3512px;top:547px;width:2px;height:1765.28px;background:#d0d0d0;"></div>
<div style="left:3729.5px;top:445px;width:2px;height:102px;background:#b8b8b8;"></div>
<div style="left:3729.5px;top:547px;width:2px;height:1765.28px;background:#d0d0d0;"></div>
<div style="left:3947px;top:445px;width:2px;height:102px;background:#b8b8b8;"></div>
<div style="left:3947px;top:547px;width:2px;height:1765.28px;background:#d0d0d0;"></div>
<div style="left:857px;top:547px;width:2px;height:1765.28px;background:#c0c0c0;"></div>
<div style="left:2357px;top:1184.59px;width:216px;height:47.83px;border-top:6.5px solid #0000ff;border-bottom:7px solid #0000ff;border-left:4px solid #0000ff;"></div>
<div style="left:4111.5px;top:445px;width:50.5px;height:1966px;background:#e4e4e4;"></div>
<div style="left:4111.5px;top:445px;width:3px;height:1905px;background:#c0c0c0;"></div>
<div style="left:4119px;top:445px;width:43px;height:1905px;background:#dcdcdc;"></div>
<div style="left:4114px;top:443px;width:48px;height:12px;background:#eee;border:2px solid #c4c4c4;"></div>
<div style="left:4121px;top:457px;width:37px;height:39px;background:#fff;border:2px solid #c8c8c8;"></div>
<svg style="left:4127px;top:470px;" width="25" height="13" viewBox="0 0 25 13"><path d="M0 13H25L12.5 0Z" fill="#8c8c8c"/></svg>
<div style="left:4121px;top:1452px;width:37px;height:855px;background:#fff;border:2px solid #cdcdcd;"></div>
<div style="left:4121px;top:2309px;width:37px;height:37px;background:#fff;border:2px solid #c8c8c8;"></div>
<svg style="left:4127px;top:2322px;" width="25" height="13" viewBox="0 0 25 13"><path d="M0 0H25L12.5 13Z" fill="#8c8c8c"/></svg>
<div style="left:786px;top:2350px;width:3333.5px;height:56px;background:#e0e0e0;border-top:2px solid #c8c8c8;"></div>
<div style="left:797px;top:2357px;width:41px;height:40px;background:#fff;border:2px solid #c0c0c0;"></div>
<div style="left:839px;top:2357px;width:1700px;height:40px;background:#fff;border:2px solid #c0c0c0;"></div>
<svg style="left:810px;top:2365px;" width="13" height="25" viewBox="0 0 13 25"><path d="M13 0V25L0 12.5Z" fill="#777"/></svg>
<div style="left:4070px;top:2357px;width:40px;height:40px;background:#fff;border:2px solid #c0c0c0;"></div>
<svg style="left:4084px;top:2365px;" width="13" height="25" viewBox="0 0 13 25"><path d="M0 0V25L13 12.5Z" fill="#777"/></svg>
<div style="left:782px;top:2404px;width:3380px;height:8px;background:#f0f0f0;border-top:2px solid #bcbcbc;"></div>
<div style="left:3969px;top:2411px;width:193px;height:64px;background:#f0f0f0;border-top:2px solid #c4c4c4;"></div>
<div style="left:861.3px;top:1479.5px;width:3107.7px;height:1000.5px;background:#e6e6e6;border:3px solid #000;"></div>
<div style="left:864.3px;top:1482.5px;width:3101.7px;height:93.5px;background:#217346;"></div>
<svg style="left:915px;top:1510px;" width="46" height="46" viewBox="0 0 46 46"><path d="M2 2H44V44H9L2 37Z" fill="none" stroke="#fff" stroke-width="3"/><path d="M11 2V18H35V2" fill="none" stroke="#fff" stroke-width="3"/><path d="M13 44V30H33V44" fill="none" stroke="#fff" stroke-width="3"/></svg>
<svg style="left:995px;top:1508px;" width="40" height="48" viewBox="0 0 40 48"><path d="M3 3V18H18" fill="none" stroke="#67a585" stroke-width="3"/><path d="M4 17Q14 4 27 8Q38 13 36 25Q33 34 17 46" fill="none" stroke="#67a585" stroke-width="3"/></svg>
<svg style="left:1055px;top:1522px;" width="16" height="10" viewBox="0 0 16 10"><path d="M1 1L8 8L15 1" fill="none" stroke="#67a585" stroke-width="2.5"/></svg>
<svg style="left:1101px;top:1508px;" width="40" height="48" viewBox="0 0 40 48"><path d="M37 3V18H22" fill="none" stroke="#67a585" stroke-width="3"/><path d="M36 17Q26 4 13 8Q2 13 4 25Q7 34 23 46" fill="none" stroke="#67a585" stroke-width="3"/></svg>
<svg style="left:1159px;top:1522px;" width="16" height="10" viewBox="0 0 16 10"><path d="M1 1L8 8L15 1" fill="none" stroke="#67a585" stroke-width="2.5"/></svg>
<svg style="left:1214px;top:1521px;" width="21" height="18" viewBox="0 0 21 18"><path d="M0 1.5H21" stroke="#fff" stroke-width="3"/><path d="M2 8L10.5 16L19 8" fill="none" stroke="#fff" stroke-width="3.5"/></svg>
<div class="t" style="left:1502.0px;top:1512.9px;font-size:32px;line-height:32px;color:#fff;letter-spacing:0.22px;">Betonvloer</div>
<div class="t" style="left:1676.0px;top:1512.9px;font-size:32px;line-height:32px;color:#fff;">-</div>
<div class="t" style="left:1706.0px;top:1512.9px;font-size:32px;line-height:32px;color:#fff;letter-spacing:-2.06px;">Excel</div>
<div style="left:2018px;top:1497px;width:838px;height:65px;background:#9fcdb3;"></div>
<svg style="left:2072px;top:1508px;" width="40" height="42" viewBox="0 0 40 42"><circle cx="25" cy="15" r="12.5" fill="none" stroke="#185c37" stroke-width="2.8"/><path d="M16 24L1 40" stroke="#185c37" stroke-width="2.8"/></svg>
<div class="t" style="left:2152.0px;top:1513.4px;font-size:32px;line-height:32px;color:#185c37;letter-spacing:0.05px;">Zoeken</div>
<div class="t" style="left:3277.0px;top:1513.4px;font-size:32px;line-height:32px;color:#fff;letter-spacing:-0.53px;">Yasper Kuiper</div>
<div style="left:3498px;top:1495.5px;width:66px;height:66px;border-radius:50%;background:#9c6f0a"></div>
<div class="t" style="left:3516.0px;top:1516.3px;font-size:26px;line-height:26px;color:#fff;letter-spacing:-4.69px;">YK</div>
<svg style="left:3622px;top:1513px;" width="38" height="30" viewBox="0 0 38 30"><rect x="1.5" y="1.5" width="35" height="27" fill="none" stroke="#fff" stroke-width="3"/><path d="M1 7H37" stroke="#fff" stroke-width="3"/><path d="M19 26V13M13 18L19 12L25 18" fill="none" stroke="#fff" stroke-width="3"/></svg>
<div style="left:3721px;top:1526px;width:28px;height:3px;background:#fff;"></div>
<div style="left:3814px;top:1514.5px;width:27px;height:27px;border:3px solid #fff;border-radius:3px;"></div>
<svg style="left:3906px;top:1514px;" width="29" height="29" viewBox="0 0 29 29"><path d="M1 1L28 28M28 1L1 28" stroke="#fff" stroke-width="3"/></svg>
<div style="left:864.3px;top:1576px;width:3101.7px;height:344px;background:#f3f2f1;"></div>
<div class="t" style="left:900.5px;top:1601.9px;font-size:35px;line-height:35px;color:#444;letter-spacing:-0.49px;">Bestand</div>
<div class="t" style="left:1101.0px;top:1601.9px;font-size:35px;line-height:35px;color:#444;letter-spacing:-0.35px;">Start</div>
<div class="t" style="left:1249.5px;top:1601.9px;font-size:35px;line-height:35px;color:#444;letter-spacing:0.14px;">Invoegen</div>
<div class="t" style="left:1471.5px;top:1601.9px;font-size:35px;line-height:35px;color:#444;letter-spacing:-0.72px;">Tekenen</div>
<div class="t" style="left:1676.5px;top:1601.9px;font-size:35px;line-height:35px;color:#444;letter-spacing:0.34px;">Pagina-indeling</div>
<div class="t" style="left:2003.0px;top:1601.9px;font-size:35px;line-height:35px;color:#444;letter-spacing:-0.55px;">Formules</div>
<div class="t" style="left:2221.5px;top:1601.9px;font-size:35px;line-height:35px;color:#444;letter-spacing:-0.79px;">Gegevens</div>
<div class="t" style="left:2454.5px;top:1601.9px;font-size:35px;line-height:35px;color:#444;letter-spacing:0.21px;">Controleren</div>
<div class="t" style="left:2719.0px;top:1601.9px;font-size:35px;line-height:35px;color:#444;letter-spacing:-1.13px;">Beeld</div>
<div class="t" style="left:2881.0px;top:1601.9px;font-size:35px;line-height:35px;color:#444;letter-spacing:-0.33px;">Help</div>
<div class="t" style="left:3025.0px;top:1601.9px;font-size:35px;line-height:35px;color:#3b3b3b;letter-spacing:-1.69px;font-weight:bold;">IBIS</div>
<div style="left:3024.5px;top:1645px;width:64.5px;height:7px;background:#217346;"></div>
<div style="left:3750px;top:1585px;width:183px;height:63px;background:#fff;border:2px solid #d6d6d6;border-radius:5px;"></div>
<svg style="left:3770px;top:1602px;" width="34" height="32" viewBox="0 0 34 32"><path d="M2 12V30H24V24" fill="none" stroke="#217346" stroke-width="3"/><path d="M8 22Q10 10 22 10V3L32 12L22 21V14Q14 14 8 22Z" fill="none" stroke="#217346" stroke-width="2.6" stroke-linejoin="round"/></svg>
<div class="t" style="left:3816.0px;top:1601.4px;font-size:34px;line-height:34px;color:#217346;letter-spacing:0.35px;font-weight:bold;">Delen</div>
<div class="t" style="left:893.0px;top:1773.9px;font-size:33px;line-height:33px;color:#333;letter-spacing:-0.64px;">Koppelen</div>
<div class="t" style="left:1044.0px;top:1773.9px;font-size:33px;line-height:33px;color:#b4b4b4;letter-spacing:0.09px;">Ontkoppelen</div>
<div class="t" style="left:1270.5px;top:1773.9px;font-size:33px;line-height:33px;color:#333;letter-spacing:-0.88px;">Bijwerken</div>
<div class="t" style="left:1423.0px;top:1773.9px;font-size:33px;line-height:33px;color:#333;letter-spacing:-0.53px;">Herleiden</div>
<div style="left:1251px;top:1683px;width:2px;height:167px;background:#d0d0d0;"></div>
<div style="left:1587px;top:1667px;width:2px;height:243px;background:#c8c8c8;"></div>
<div class="t" style="left:1143.5px;top:1885.3px;font-size:29px;line-height:29px;color:#444;letter-spacing:0.17px;">Koppelingen</div>
<svg style="left:3917px;top:1894px;" width="28" height="18" viewBox="0 0 28 18"><path d="M2 16L14 3L26 16" fill="none" stroke="#333" stroke-width="3"/></svg>
<svg style="left:910.5px;top:1667.5px;" width="100" height="100" viewBox="0 0 100 100"><g transform="translate(50,50) rotate(-45)"><rect x="-42.0" y="-11.5" width="50" height="29" rx="11" fill="none" stroke="#3a78b8" stroke-width="8.5"/><rect x="-8.0" y="-17.5" width="50" height="29" rx="11" fill="none" stroke="#f3f2f1" stroke-width="14.5"/><rect x="-8.0" y="-17.5" width="50" height="29" rx="11" fill="none" stroke="#3a78b8" stroke-width="8.5"/><clipPath id="cl960"><rect x="-12" y="-20" width="22" height="16"/></clipPath><g clip-path="url(#cl960)"><rect x="-42.0" y="-11.5" width="50" height="29" rx="11" fill="none" stroke="#f3f2f1" stroke-width="14.5"/><rect x="-42.0" y="-11.5" width="50" height="29" rx="11" fill="none" stroke="#3a78b8" stroke-width="8.5"/></g></g></svg>
<svg style="left:1085px;top:1663px;" width="100" height="100" viewBox="0 0 100 100"><g transform="translate(50,50) rotate(-45)"><rect x="-42.0" y="-11.5" width="50" height="29" rx="11" fill="none" stroke="#b0aeb0" stroke-width="8.5"/><rect x="-8.0" y="-17.5" width="50" height="29" rx="11" fill="none" stroke="#f3f2f1" stroke-width="14.5"/><rect x="-8.0" y="-17.5" width="50" height="29" rx="11" fill="none" stroke="#b0aeb0" stroke-width="8.5"/><clipPath id="cl1135"><rect x="-12" y="-20" width="22" height="16"/></clipPath><g clip-path="url(#cl1135)"><rect x="-42.0" y="-11.5" width="50" height="29" rx="11" fill="none" stroke="#f3f2f1" stroke-width="14.5"/><rect x="-42.0" y="-11.5" width="50" height="29" rx="11" fill="none" stroke="#b0aeb0" stroke-width="8.5"/></g></g><path d="M62 62L84 84M84 62L62 84" stroke="#b0aeb0" stroke-width="9.5"/></svg>
<svg style="left:1299.5px;top:1671.5px;" width="80" height="82" viewBox="0 0 80 82"><path d="M25.7 19.1A30.5 30.5 0 1 0 63.4 26.4" fill="none" stroke="#3a78b8" stroke-width="9.5"/><path d="M43.5 7L74.5 14.5L51 39Z" fill="#3a78b8"/></svg>
<svg style="left:1447px;top:1683px;" width="92" height="80" viewBox="0 0 92 80"><rect x="2" y="2" width="77" height="52" rx="2" fill="#fff" stroke="#8a8a8a" stroke-width="2.5"/><path d="M2 15H79M2 28H79M2 41H79M20 2V54M42 2V54M62 2V54" stroke="#a8a8a8" stroke-width="2"/><rect x="20" y="15" width="22" height="13" fill="#cfeaff" stroke="#3f6f98" stroke-width="2"/><circle cx="68" cy="52" r="14" fill="#f3f2f1" stroke="#3a78b8" stroke-width="6"/><path d="M58 63L47 74" stroke="#3a78b8" stroke-width="7"/></svg>
<div style="left:864.3px;top:1919px;width:3101.7px;height:30px;background:linear-gradient(#d2d2d2,#e0e0e0 40%,#e6e6e6);"></div>
<div style="left:864.3px;top:1949px;width:3101.7px;height:90px;background:#e6e6e6;"></div>
<div style="left:878px;top:1951px;width:273px;height:59px;background:#fff;border:1.5px solid #d0d0d0;"></div>
<div class="t" style="left:886.0px;top:1963.4px;font-size:36px;line-height:36px;color:#3a3a3a;letter-spacing:-4.02px;">D1</div>
<svg style="left:1116px;top:1974px;" width="20" height="11" viewBox="0 0 20 11"><path d="M0 0H20L10 11Z" fill="#6a6a6a"/></svg>
<div style="left:1189px;top:1967px;width:4px;height:4px;background:#a8a8a8;"></div>
<div style="left:1189px;top:1978px;width:4px;height:4px;background:#a8a8a8;"></div>
<div style="left:1189px;top:1989px;width:4px;height:4px;background:#a8a8a8;"></div>
<div style="left:1233px;top:1951px;width:296px;height:59px;background:#fff;border:1.5px solid #d0d0d0;"></div>
<svg style="left:1266px;top:1964px;" width="34" height="32" viewBox="0 0 34 32"><path d="M2 2L32 30M32 2L2 30" stroke="#b0b0b0" stroke-width="3.5"/></svg>
<svg style="left:1362px;top:1964px;" width="38" height="32" viewBox="0 0 38 32"><path d="M2 18L13 29L36 2" fill="none" stroke="#b0b0b0" stroke-width="5"/></svg>
<div class="t" style="left:1463.0px;top:1962.4px;font-size:38px;line-height:38px;color:#666;letter-spacing:4.57px;font-style:italic;font-family:'Liberation Serif',serif;">fx</div>
<div style="left:1537px;top:1951px;width:2416px;height:59px;background:#fff;border:1.5px solid #d0d0d0;"></div>
<div class="t" style="left:1569.0px;top:1963.4px;font-size:36px;line-height:36px;color:#222;letter-spacing:-2.05px;">12</div>
<svg style="left:3916px;top:1970px;" width="30" height="20" viewBox="0 0 30 20"><path d="M2 2L15 16L28 2" fill="none" stroke="#6a6a6a" stroke-width="5"/></svg>
<div style="left:864.3px;top:2037px;width:3051.2px;height:52px;background:#e6e6e6;"></div>
<div style="left:936px;top:2089px;width:2979.5px;height:386px;background:#fff;"></div>
<div style="left:1730px;top:2037px;width:183.5px;height:52px;background:#d2d2d2;"></div>
<div style="left:864.3px;top:2089px;width:71.7px;height:386px;background:#e6e6e6;"></div>
<div style="left:864.3px;top:2089.2px;width:71.7px;height:52.75px;background:#d2d2d2;"></div>
<div style="left:864.3px;top:2088.2px;width:71.7px;height:2px;background:#b0b0b0;"></div>
<div style="left:936px;top:2088.2px;width:2979.5px;height:2px;background:#a8a8a8;"></div>
<div style="left:864.3px;top:2141.2px;width:71.7px;height:1.5px;background:#c8c8c8;"></div>
<div style="left:936px;top:2141.2px;width:2979.5px;height:1.5px;background:#d6d6d6;"></div>
<div style="left:864.3px;top:2193.95px;width:71.7px;height:1.5px;background:#c8c8c8;"></div>
<div style="left:936px;top:2193.95px;width:2979.5px;height:1.5px;background:#d6d6d6;"></div>
<div style="left:864.3px;top:2246.7px;width:71.7px;height:1.5px;background:#c8c8c8;"></div>
<div style="left:936px;top:2246.7px;width:2979.5px;height:1.5px;background:#d6d6d6;"></div>
<div style="left:864.3px;top:2299.45px;width:71.7px;height:1.5px;background:#c8c8c8;"></div>
<div style="left:936px;top:2299.45px;width:2979.5px;height:1.5px;background:#d6d6d6;"></div>
<div style="left:864.3px;top:2352.2px;width:71.7px;height:1.5px;background:#c8c8c8;"></div>
<div style="left:936px;top:2352.2px;width:2979.5px;height:1.5px;background:#d6d6d6;"></div>
<div style="left:864.3px;top:2404.95px;width:71.7px;height:1.5px;background:#c8c8c8;"></div>
<div style="left:936px;top:2404.95px;width:2979.5px;height:1.5px;background:#d6d6d6;"></div>
<div style="left:864.3px;top:2457.7px;width:71.7px;height:1.5px;background:#c8c8c8;"></div>
<div style="left:936px;top:2457.7px;width:2979.5px;height:1.5px;background:#d6d6d6;"></div>
<div style="left:864.3px;top:2510.45px;width:71.7px;height:1.5px;background:#c8c8c8;"></div>
<div style="left:936px;top:2510.45px;width:2979.5px;height:1.5px;background:#d6d6d6;"></div>
<div style="left:935.25px;top:2042px;width:1.5px;height:47px;background:#c4c4c4;"></div>
<div style="left:935px;top:2089px;width:2px;height:386px;background:#b0b0b0;"></div>
<div style="left:1178.25px;top:2042px;width:1.5px;height:47px;background:#c4c4c4;"></div>
<div style="left:1178.25px;top:2089px;width:1.5px;height:386px;background:#d6d6d6;"></div>
<div style="left:1546.25px;top:2042px;width:1.5px;height:47px;background:#c4c4c4;"></div>
<div style="left:1546.25px;top:2089px;width:1.5px;height:386px;background:#d6d6d6;"></div>
<div style="left:1729.25px;top:2042px;width:1.5px;height:47px;background:#c4c4c4;"></div>
<div style="left:1729.25px;top:2089px;width:1.5px;height:386px;background:#d6d6d6;"></div>
<div style="left:1912.75px;top:2042px;width:1.5px;height:47px;background:#c4c4c4;"></div>
<div style="left:1912.75px;top:2089px;width:1.5px;height:386px;background:#d6d6d6;"></div>
<div style="left:2095.75px;top:2042px;width:1.5px;height:47px;background:#c4c4c4;"></div>
<div style="left:2095.75px;top:2089px;width:1.5px;height:386px;background:#d6d6d6;"></div>
<div style="left:2278.75px;top:2042px;width:1.5px;height:47px;background:#c4c4c4;"></div>
<div style="left:2278.75px;top:2089px;width:1.5px;height:386px;background:#d6d6d6;"></div>
<div style="left:2462.25px;top:2042px;width:1.5px;height:47px;background:#c4c4c4;"></div>
<div style="left:2462.25px;top:2089px;width:1.5px;height:386px;background:#d6d6d6;"></div>
<div style="left:2645.25px;top:2042px;width:1.5px;height:47px;background:#c4c4c4;"></div>
<div style="left:2645.25px;top:2089px;width:1.5px;height:386px;background:#d6d6d6;"></div>
<div style="left:2828.25px;top:2042px;width:1.5px;height:47px;background:#c4c4c4;"></div>
<div style="left:2828.25px;top:2089px;width:1.5px;height:386px;background:#d6d6d6;"></div>
<div style="left:3011.25px;top:2042px;width:1.5px;height:47px;background:#c4c4c4;"></div>
<div style="left:3011.25px;top:2089px;width:1.5px;height:386px;background:#d6d6d6;"></div>
<div style="left:3194.25px;top:2042px;width:1.5px;height:47px;background:#c4c4c4;"></div>
<div style="left:3194.25px;top:2089px;width:1.5px;height:386px;background:#d6d6d6;"></div>
<div style="left:3377.25px;top:2042px;width:1.5px;height:47px;background:#c4c4c4;"></div>
<div style="left:3377.25px;top:2089px;width:1.5px;height:386px;background:#d6d6d6;"></div>
<div style="left:3560.25px;top:2042px;width:1.5px;height:47px;background:#c4c4c4;"></div>
<div style="left:3560.25px;top:2089px;width:1.5px;height:386px;background:#d6d6d6;"></div>
<div style="left:3743.25px;top:2042px;width:1.5px;height:47px;background:#c4c4c4;"></div>
<div style="left:3743.25px;top:2089px;width:1.5px;height:386px;background:#d6d6d6;"></div>
<div style="left:3914.75px;top:2042px;width:1.5px;height:47px;background:#c4c4c4;"></div>
<div style="left:3914.75px;top:2089px;width:1.5px;height:386px;background:#d6d6d6;"></div>
<div style="left:1731px;top:2142.95px;width:181.5px;height:261.75px;background:#ffff00;"></div>
<svg style="left:890px;top:2043px;" width="44" height="42" viewBox="0 0 44 42"><path d="M44 0V42H0Z" fill="#b4b4b4"/></svg>
<div class="t" style="left:1045.5px;top:2046.4px;font-size:36px;line-height:36px;color:#222;">A</div>
<div class="t" style="left:1351.0px;top:2046.4px;font-size:36px;line-height:36px;color:#222;">B</div>
<div class="t" style="left:1625.5px;top:2046.4px;font-size:36px;line-height:36px;color:#222;">C</div>
<div class="t" style="left:1808.8px;top:2046.4px;font-size:36px;line-height:36px;color:#217346;">D</div>
<div class="t" style="left:1993.0px;top:2046.4px;font-size:36px;line-height:36px;color:#222;">E</div>
<div class="t" style="left:2177.0px;top:2046.4px;font-size:36px;line-height:36px;color:#222;">F</div>
<div class="t" style="left:2357.2px;top:2046.4px;font-size:36px;line-height:36px;color:#222;">G</div>
<div class="t" style="left:2541.5px;top:2046.4px;font-size:36px;line-height:36px;color:#222;">H</div>
<div class="t" style="left:2732.5px;top:2046.4px;font-size:36px;line-height:36px;color:#222;">I</div>
<div class="t" style="left:2911.5px;top:2046.4px;font-size:36px;line-height:36px;color:#222;">J</div>
<div class="t" style="left:3091.5px;top:2046.4px;font-size:36px;line-height:36px;color:#222;">K</div>
<div class="t" style="left:3276.5px;top:2046.4px;font-size:36px;line-height:36px;color:#222;">L</div>
<div class="t" style="left:3454.5px;top:2046.4px;font-size:36px;line-height:36px;color:#222;">M</div>
<div class="t" style="left:3639.5px;top:2046.4px;font-size:36px;line-height:36px;color:#222;">N</div>
<div class="t" style="left:3821.5px;top:2046.4px;font-size:36px;line-height:36px;color:#222;">O</div>
<div style="left:1730px;top:2086px;width:183.5px;height:4px;background:#217346;"></div>
<div style="left:933px;top:2089.2px;width:4px;height:52.75px;background:#217346;"></div>
<div class="t" style="left:890.5px;top:2100.0px;font-size:36px;line-height:36px;color:#217346;">1</div>
<div class="t" style="left:890.5px;top:2152.7px;font-size:36px;line-height:36px;color:#222;">2</div>
<div class="t" style="left:890.5px;top:2205.5px;font-size:36px;line-height:36px;color:#222;">3</div>
<div class="t" style="left:890.5px;top:2258.2px;font-size:36px;line-height:36px;color:#222;">4</div>
<div class="t" style="left:890.5px;top:2311.0px;font-size:36px;line-height:36px;color:#222;">5</div>
<div class="t" style="left:890.5px;top:2363.7px;font-size:36px;line-height:36px;color:#222;">6</div>
<div class="t" style="left:890.5px;top:2416.5px;font-size:36px;line-height:36px;color:#222;">7</div>
<div class="t" style="left:890.5px;top:2469.2px;font-size:36px;line-height:36px;color:#222;">8</div>
<div class="t" style="left:945.0px;top:2100.7px;font-size:36.5px;line-height:36.5px;color:#000;letter-spacing:0.32px;">Betonwerk</div>
<div class="t" style="left:1518.7px;top:2100.7px;font-size:36.5px;line-height:36.5px;color:#000;">1</div>
<div class="t" style="left:1865.9px;top:2100.7px;font-size:36.5px;line-height:36.5px;color:#000;">12</div>
<div class="t" style="left:945.0px;top:2153.5px;font-size:36.5px;line-height:36.5px;color:#000;letter-spacing:0.80px;">Werkvloer</div>
<div class="t" style="left:1447.7px;top:2153.5px;font-size:36.5px;line-height:36.5px;color:#000;">0,033</div>
<div class="t" style="left:1555.0px;top:2153.5px;font-size:36.5px;line-height:36.5px;color:#000;">m³</div>
<div class="t" style="left:1815.2px;top:2153.5px;font-size:36.5px;line-height:36.5px;color:#000;">0,396</div>
<div class="t" style="left:1921.0px;top:2153.5px;font-size:36.5px;line-height:36.5px;color:#000;">m³</div>
<div class="t" style="left:945.0px;top:2206.2px;font-size:36.5px;line-height:36.5px;color:#000;letter-spacing:-0.00px;">Wapening</div>
<div class="t" style="left:1488.3px;top:2206.2px;font-size:36.5px;line-height:36.5px;color:#000;">4,5</div>
<div class="t" style="left:1555.0px;top:2206.2px;font-size:36.5px;line-height:36.5px;color:#000;">kg</div>
<div class="t" style="left:1865.9px;top:2206.2px;font-size:36.5px;line-height:36.5px;color:#000;">54</div>
<div class="t" style="left:1921.0px;top:2206.2px;font-size:36.5px;line-height:36.5px;color:#000;">kg</div>
<div class="t" style="left:945.0px;top:2259.0px;font-size:36.5px;line-height:36.5px;color:#000;letter-spacing:-0.10px;">Beton</div>
<div class="t" style="left:1447.7px;top:2259.0px;font-size:36.5px;line-height:36.5px;color:#000;">0,104</div>
<div class="t" style="left:1555.0px;top:2259.0px;font-size:36.5px;line-height:36.5px;color:#000;">m³</div>
<div class="t" style="left:1815.2px;top:2259.0px;font-size:36.5px;line-height:36.5px;color:#000;">1,248</div>
<div class="t" style="left:1921.0px;top:2259.0px;font-size:36.5px;line-height:36.5px;color:#000;">m³</div>
<div class="t" style="left:945.0px;top:2311.7px;font-size:36.5px;line-height:36.5px;color:#000;letter-spacing:0.26px;">Afwerken</div>
<div class="t" style="left:1518.7px;top:2311.7px;font-size:36.5px;line-height:36.5px;color:#000;">1</div>
<div class="t" style="left:1555.0px;top:2311.7px;font-size:36.5px;line-height:36.5px;color:#000;">m²</div>
<div class="t" style="left:1865.9px;top:2311.7px;font-size:36.5px;line-height:36.5px;color:#000;">12</div>
<div class="t" style="left:1921.0px;top:2311.7px;font-size:36.5px;line-height:36.5px;color:#000;">m²</div>
<div class="t" style="left:945.0px;top:2364.5px;font-size:36.5px;line-height:36.5px;color:#000;letter-spacing:-1.10px;">Kraan</div>
<div class="t" style="left:1447.7px;top:2364.5px;font-size:36.5px;line-height:36.5px;color:#000;">0,125</div>
<div class="t" style="left:1555.0px;top:2364.5px;font-size:36.5px;line-height:36.5px;color:#000;">uur</div>
<div class="t" style="left:1855.8px;top:2364.5px;font-size:36.5px;line-height:36.5px;color:#000;">1,5</div>
<div class="t" style="left:1921.0px;top:2364.5px;font-size:36.5px;line-height:36.5px;color:#000;">uur</div>
<div style="left:1728.5px;top:2087.2px;width:186.5px;height:56.75px;border:3px solid #217346;"></div>
<div style="left:1905px;top:2134.95px;width:12px;height:12px;background:#217346;border:2px solid #fff;"></div>
<div style="left:3915.5px;top:2037px;width:50.5px;height:438px;background:#e6e6e6;"></div>
<div style="left:3920px;top:2040px;width:42px;height:43px;background:#fff;border:2px solid #cfcfcf;"></div>
<svg style="left:3931px;top:2056px;" width="20" height="11" viewBox="0 0 20 11"><path d="M0 11H20L10 0Z" fill="#777"/></svg>
<div style="left:3920px;top:2086px;width:42px;height:393px;background:#fff;border:2px solid #cfcfcf;"></div>
<div style="left:875px;top:1646px;width:167px;height:198px;border:7px solid #ff0000;border-radius:30px;"></div>
<div style="left:1719.5px;top:2076.5px;width:211px;height:78px;border:7px solid #ff0000;border-radius:19px;"></div>
<div style="left:2360px;top:1168px;width:213px;height:79px;border:7.5px solid #ff0000;border-radius:15px;"></div>
</body></html>
